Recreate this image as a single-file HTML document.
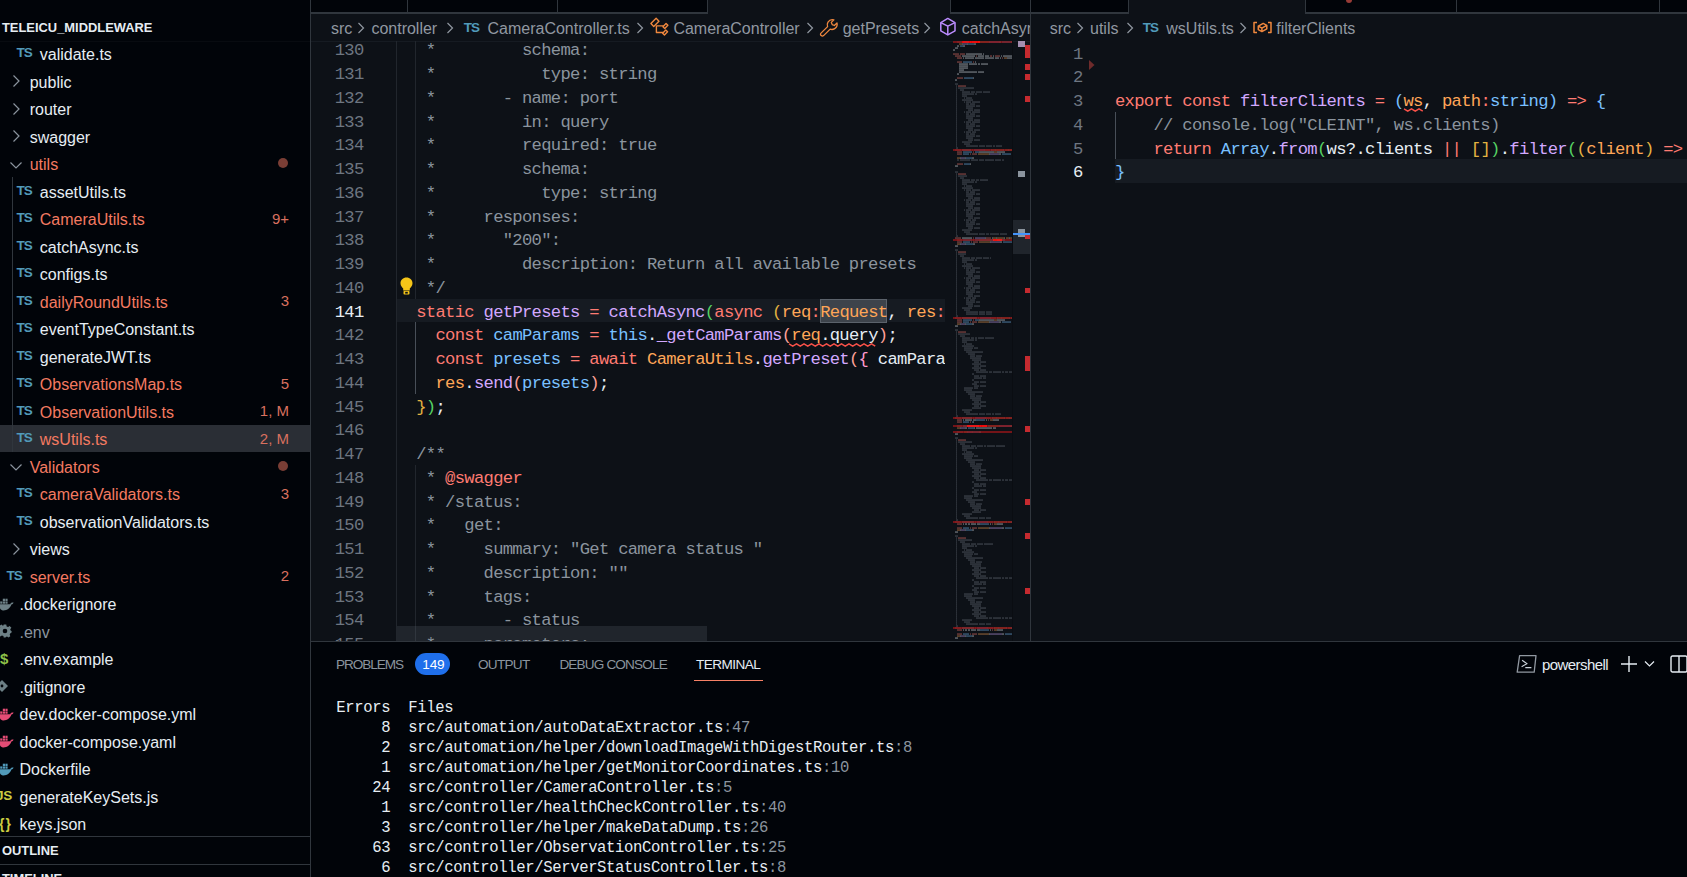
<!DOCTYPE html><html><head><meta charset="utf-8"><style>
*{margin:0;padding:0;box-sizing:border-box}
html,body{width:1687px;height:877px;overflow:hidden;background:#010409;}
body{position:relative;font-family:"Liberation Sans",sans-serif;color:#e6edf3;}
.a{position:absolute}
.ui{font-family:"Liberation Sans",sans-serif;font-size:16px;white-space:pre;line-height:20px}
.mono{font-family:"Liberation Mono",monospace;white-space:pre}
.code{font-size:17.2px;letter-spacing:-0.7px;line-height:23.75px;height:23.75px;padding-top:2px}
.k{color:#ff7b72} .f{color:#d2a8ff} .c{color:#79c0ff} .o{color:#ffa657} .cm{color:#8b949e} .w{color:#e6edf3}
.b1{color:#79c0ff} .b2{color:#56d364} .b3{color:#e3b341} .b4{color:#ffa198} .b5{color:#ff9bce}

</style></head><body>
<div class="a" style="left:0;top:0;width:310px;height:877px;background:#010409"></div>
<div class="a" style="left:310px;top:0;width:1px;height:877px;background:#30363d"></div>
<div class="a ui" style="left:2px;top:18px;font-size:12.9px;font-weight:bold;color:#e6edf3;letter-spacing:0px">TELEICU_MIDDLEWARE</div>
<div class="a" style="left:0;top:41px;width:310px;height:1px;background:#080b10"></div>
<div class="a" style="left:16.599999999999998px;top:47.300000000000004px;font-family:'Liberation Sans';font-weight:bold;font-size:13.5px;line-height:12px;color:#519aba;letter-spacing:-1px">TS</div>
<div class="a ui" style="left:39.8px;top:45.1px;color:#e6edf3">validate.ts</div>
<svg class="a" style="left:8.7px;top:74.1px" width="14" height="14" viewBox="0 0 14 14"><path d="M4.5 1.5 L10 7 L4.5 12.5" fill="none" stroke="#8b949e" stroke-width="1.2"/></svg>
<div class="a ui" style="left:29.7px;top:72.6px;color:#e6edf3">public</div>
<svg class="a" style="left:8.7px;top:101.6px" width="14" height="14" viewBox="0 0 14 14"><path d="M4.5 1.5 L10 7 L4.5 12.5" fill="none" stroke="#8b949e" stroke-width="1.2"/></svg>
<div class="a ui" style="left:29.7px;top:100.1px;color:#e6edf3">router</div>
<svg class="a" style="left:8.7px;top:129.1px" width="14" height="14" viewBox="0 0 14 14"><path d="M4.5 1.5 L10 7 L4.5 12.5" fill="none" stroke="#8b949e" stroke-width="1.2"/></svg>
<div class="a ui" style="left:29.7px;top:127.6px;color:#e6edf3">swagger</div>
<svg class="a" style="left:8.7px;top:157.6px" width="14" height="14" viewBox="0 0 14 14"><path d="M1.5 4.5 L7 10 L12.5 4.5" fill="none" stroke="#8b949e" stroke-width="1.2"/></svg>
<div class="a ui" style="left:29.7px;top:155.1px;color:#f47a61">utils</div>
<div class="a" style="left:278px;top:158.1px;width:10px;height:10px;border-radius:50%;background:#7a3e35"></div>
<div class="a" style="left:16.599999999999998px;top:184.79999999999998px;font-family:'Liberation Sans';font-weight:bold;font-size:13.5px;line-height:12px;color:#519aba;letter-spacing:-1px">TS</div>
<div class="a ui" style="left:39.8px;top:182.6px;color:#e6edf3">assetUtils.ts</div>
<div class="a" style="left:16.599999999999998px;top:212.29999999999998px;font-family:'Liberation Sans';font-weight:bold;font-size:13.5px;line-height:12px;color:#519aba;letter-spacing:-1px">TS</div>
<div class="a ui" style="left:39.8px;top:210.1px;color:#f47a61">CameraUtils.ts</div>
<div class="a ui" style="right:1398px;top:208.6px;color:#d9705f;font-size:15px">9+</div>
<div class="a" style="left:16.599999999999998px;top:239.79999999999998px;font-family:'Liberation Sans';font-weight:bold;font-size:13.5px;line-height:12px;color:#519aba;letter-spacing:-1px">TS</div>
<div class="a ui" style="left:39.8px;top:237.6px;color:#e6edf3">catchAsync.ts</div>
<div class="a" style="left:16.599999999999998px;top:267.30000000000007px;font-family:'Liberation Sans';font-weight:bold;font-size:13.5px;line-height:12px;color:#519aba;letter-spacing:-1px">TS</div>
<div class="a ui" style="left:39.8px;top:265.1px;color:#e6edf3">configs.ts</div>
<div class="a" style="left:16.599999999999998px;top:294.80000000000007px;font-family:'Liberation Sans';font-weight:bold;font-size:13.5px;line-height:12px;color:#519aba;letter-spacing:-1px">TS</div>
<div class="a ui" style="left:39.8px;top:292.6px;color:#f47a61">dailyRoundUtils.ts</div>
<div class="a ui" style="right:1398px;top:291.1px;color:#d9705f;font-size:15px">3</div>
<div class="a" style="left:16.599999999999998px;top:322.30000000000007px;font-family:'Liberation Sans';font-weight:bold;font-size:13.5px;line-height:12px;color:#519aba;letter-spacing:-1px">TS</div>
<div class="a ui" style="left:39.8px;top:320.1px;color:#e6edf3">eventTypeConstant.ts</div>
<div class="a" style="left:16.599999999999998px;top:349.80000000000007px;font-family:'Liberation Sans';font-weight:bold;font-size:13.5px;line-height:12px;color:#519aba;letter-spacing:-1px">TS</div>
<div class="a ui" style="left:39.8px;top:347.6px;color:#e6edf3">generateJWT.ts</div>
<div class="a" style="left:16.599999999999998px;top:377.30000000000007px;font-family:'Liberation Sans';font-weight:bold;font-size:13.5px;line-height:12px;color:#519aba;letter-spacing:-1px">TS</div>
<div class="a ui" style="left:39.8px;top:375.1px;color:#f47a61">ObservationsMap.ts</div>
<div class="a ui" style="right:1398px;top:373.6px;color:#d9705f;font-size:15px">5</div>
<div class="a" style="left:16.599999999999998px;top:404.80000000000007px;font-family:'Liberation Sans';font-weight:bold;font-size:13.5px;line-height:12px;color:#519aba;letter-spacing:-1px">TS</div>
<div class="a ui" style="left:39.8px;top:402.6px;color:#f47a61">ObservationUtils.ts</div>
<div class="a ui" style="right:1398px;top:401.1px;color:#d9705f;font-size:15px">1, M</div>
<div class="a" style="left:0;top:424.60px;width:310px;height:27.5px;background:#2a2e35"></div>
<div class="a" style="left:16.599999999999998px;top:432.30000000000007px;font-family:'Liberation Sans';font-weight:bold;font-size:13.5px;line-height:12px;color:#519aba;letter-spacing:-1px">TS</div>
<div class="a ui" style="left:39.8px;top:430.1px;color:#f47a61">wsUtils.ts</div>
<div class="a ui" style="right:1398px;top:428.6px;color:#d9705f;font-size:15px">2, M</div>
<svg class="a" style="left:8.7px;top:460.1px" width="14" height="14" viewBox="0 0 14 14"><path d="M1.5 4.5 L7 10 L12.5 4.5" fill="none" stroke="#8b949e" stroke-width="1.2"/></svg>
<div class="a ui" style="left:29.7px;top:457.6px;color:#f47a61">Validators</div>
<div class="a" style="left:278px;top:460.6px;width:10px;height:10px;border-radius:50%;background:#7a3e35"></div>
<div class="a" style="left:16.599999999999998px;top:487.30000000000007px;font-family:'Liberation Sans';font-weight:bold;font-size:13.5px;line-height:12px;color:#519aba;letter-spacing:-1px">TS</div>
<div class="a ui" style="left:39.8px;top:485.1px;color:#f47a61">cameraValidators.ts</div>
<div class="a ui" style="right:1398px;top:483.6px;color:#d9705f;font-size:15px">3</div>
<div class="a" style="left:16.599999999999998px;top:514.8000000000001px;font-family:'Liberation Sans';font-weight:bold;font-size:13.5px;line-height:12px;color:#519aba;letter-spacing:-1px">TS</div>
<div class="a ui" style="left:39.8px;top:512.6px;color:#e6edf3">observationValidators.ts</div>
<svg class="a" style="left:8.7px;top:541.6px" width="14" height="14" viewBox="0 0 14 14"><path d="M4.5 1.5 L10 7 L4.5 12.5" fill="none" stroke="#8b949e" stroke-width="1.2"/></svg>
<div class="a ui" style="left:29.7px;top:540.1px;color:#e6edf3">views</div>
<div class="a" style="left:6.499999999999999px;top:569.8000000000001px;font-family:'Liberation Sans';font-weight:bold;font-size:13.5px;line-height:12px;color:#519aba;letter-spacing:-1px">TS</div>
<div class="a ui" style="left:29.7px;top:567.6px;color:#f47a61">server.ts</div>
<div class="a ui" style="right:1398px;top:566.1px;color:#d9705f;font-size:15px">2</div>
<svg class="a" style="left:-1px;top:597.6px" width="15" height="13" viewBox="0 0 15 13"><path d="M0 6.2 H11.2 C11.6 5 12.6 4.4 14.6 4.6 C14.2 5.8 13.4 6.4 12.4 6.6 C11.4 10.2 8 12.6 4 12.4 C1.6 12.2 0.3 9.8 0 6.2 Z" fill="#6d8086"/><rect x="1.2" y="3.4" width="2.2" height="2.3" fill="#6d8086"/><rect x="3.8" y="3.4" width="2.2" height="2.3" fill="#6d8086"/><rect x="6.4" y="3.4" width="2.2" height="2.3" fill="#6d8086"/><rect x="3.8" y="0.7" width="2.2" height="2.3" fill="#6d8086"/><rect x="6.4" y="0.7" width="2.2" height="2.3" fill="#6d8086"/></svg>
<div class="a ui" style="left:19.5px;top:595.1px;color:#e6edf3">.dockerignore</div>
<svg class="a" style="left:-2px;top:624.1px" width="14" height="14" viewBox="-7 -7 14 14"><g fill="#6d8086"><path d="M-1.3 -6.5 H1.3 L1.6 -4.6 L3.1 -3.9 L4.6 -5.1 L6.4 -3.3 L5.2 -1.8 L5.8 -0.2 L6.6 0 V1.5 L5.4 2.2 L4.7 3.6 L5.3 5.2 L3.5 6.5 L2 5.5 L0.9 5.9 L0.6 6.6 H-1.3 L-1.6 5.1 L-3.1 4.4 L-4.7 5.5 L-6.4 3.6 L-5.2 2.1 L-5.8 0.6 L-6.6 0.3 V-1.6 L-5.5 -2 L-4.8 -3.5 L-5.6 -5.1 L-3.6 -6.4 L-2.1 -5.2 L-1.6 -5.4 Z"/></g><circle cx="0" cy="0" r="2.3" fill="#010409"/></svg>
<div class="a ui" style="left:19.5px;top:622.6px;color:#8b949e">.env</div>
<div class="a" style="left:0px;top:648.6px;font-size:15px;font-weight:bold;line-height:20px;color:#8dc149">$</div>
<div class="a ui" style="left:19.5px;top:650.1px;color:#e6edf3">.env.example</div>
<svg class="a" style="left:-4px;top:680.1px" width="12" height="12" viewBox="0 0 12 12"><path d="M6 0 L12 6 L6 12 L0 6 Z" fill="#6d8086"/><circle cx="6" cy="6" r="1.4" fill="#010409"/></svg>
<div class="a ui" style="left:19.5px;top:677.6px;color:#e6edf3">.gitignore</div>
<svg class="a" style="left:-1px;top:707.6px" width="15" height="13" viewBox="0 0 15 13"><path d="M0 6.2 H11.2 C11.6 5 12.6 4.4 14.6 4.6 C14.2 5.8 13.4 6.4 12.4 6.6 C11.4 10.2 8 12.6 4 12.4 C1.6 12.2 0.3 9.8 0 6.2 Z" fill="#e34c75"/><rect x="1.2" y="3.4" width="2.2" height="2.3" fill="#e34c75"/><rect x="3.8" y="3.4" width="2.2" height="2.3" fill="#e34c75"/><rect x="6.4" y="3.4" width="2.2" height="2.3" fill="#e34c75"/><rect x="3.8" y="0.7" width="2.2" height="2.3" fill="#e34c75"/><rect x="6.4" y="0.7" width="2.2" height="2.3" fill="#e34c75"/></svg>
<div class="a ui" style="left:19.5px;top:705.1px;color:#e6edf3">dev.docker-compose.yml</div>
<svg class="a" style="left:-1px;top:735.1px" width="15" height="13" viewBox="0 0 15 13"><path d="M0 6.2 H11.2 C11.6 5 12.6 4.4 14.6 4.6 C14.2 5.8 13.4 6.4 12.4 6.6 C11.4 10.2 8 12.6 4 12.4 C1.6 12.2 0.3 9.8 0 6.2 Z" fill="#e34c75"/><rect x="1.2" y="3.4" width="2.2" height="2.3" fill="#e34c75"/><rect x="3.8" y="3.4" width="2.2" height="2.3" fill="#e34c75"/><rect x="6.4" y="3.4" width="2.2" height="2.3" fill="#e34c75"/><rect x="3.8" y="0.7" width="2.2" height="2.3" fill="#e34c75"/><rect x="6.4" y="0.7" width="2.2" height="2.3" fill="#e34c75"/></svg>
<div class="a ui" style="left:19.5px;top:732.6px;color:#e6edf3">docker-compose.yaml</div>
<svg class="a" style="left:-1px;top:762.6px" width="15" height="13" viewBox="0 0 15 13"><path d="M0 6.2 H11.2 C11.6 5 12.6 4.4 14.6 4.6 C14.2 5.8 13.4 6.4 12.4 6.6 C11.4 10.2 8 12.6 4 12.4 C1.6 12.2 0.3 9.8 0 6.2 Z" fill="#519aba"/><rect x="1.2" y="3.4" width="2.2" height="2.3" fill="#519aba"/><rect x="3.8" y="3.4" width="2.2" height="2.3" fill="#519aba"/><rect x="6.4" y="3.4" width="2.2" height="2.3" fill="#519aba"/><rect x="3.8" y="0.7" width="2.2" height="2.3" fill="#519aba"/><rect x="6.4" y="0.7" width="2.2" height="2.3" fill="#519aba"/></svg>
<div class="a ui" style="left:19.5px;top:760.1px;color:#e6edf3">Dockerfile</div>
<div class="a" style="left:-4px;top:790.3000000000001px;font-weight:bold;font-size:13.5px;line-height:12px;color:#cbcb41;letter-spacing:-0.3px">JS</div>
<div class="a ui" style="left:19.5px;top:787.6px;color:#e6edf3">generateKeySets.js</div>
<div class="a" style="left:-1px;top:814.1px;font-weight:bold;font-size:14px;line-height:20px;color:#cbcb41;letter-spacing:1px">{}</div>
<div class="a ui" style="left:19.5px;top:815.1px;color:#e6edf3">keys.json</div>
<div class="a" style="left:12px;top:177.1px;width:1px;height:275.0px;background:#30363d"></div>
<div class="a" style="left:0;top:836px;width:310px;height:1px;background:#30363d"></div>
<div class="a ui" style="left:2px;top:841px;font-size:12.9px;font-weight:bold;color:#e6edf3">OUTLINE</div>
<div class="a" style="left:0;top:864px;width:310px;height:1px;background:#30363d"></div>
<div class="a ui" style="left:2px;top:869px;font-size:12.9px;font-weight:bold;color:#e6edf3">TIMELINE</div>
<div class="a" style="left:311px;top:0;width:1376px;height:641px;background:#0d1117"></div>
<div class="a" style="left:311px;top:0;width:1376px;height:12px;background:#010409"></div>
<div class="a" style="left:311px;top:12px;width:1376px;height:2px;background:#30363d"></div>
<div class="a" style="left:407px;top:0;width:1px;height:12px;background:#30363d"></div>
<div class="a" style="left:557px;top:0;width:1px;height:12px;background:#30363d"></div>
<div class="a" style="left:1456px;top:0;width:1px;height:12px;background:#30363d"></div>
<div class="a" style="left:1659px;top:0;width:1px;height:12px;background:#30363d"></div>
<div class="a" style="left:707px;top:0;width:244px;height:14px;background:#0d1117;border-left:1px solid #30363d;border-right:1px solid #30363d"></div>
<div class="a" style="left:1128px;top:0;width:178px;height:14px;background:#0d1117;border-left:1px solid #30363d;border-right:1px solid #30363d"></div>
<div class="a" style="left:311px;top:40.5px;width:719px;height:1px;background:#161b22"></div>
<div class="a" style="left:1030px;top:0;width:1px;height:641px;background:#30363d"></div>
<div class="a" style="left:311px;top:13px;width:719px;height:28px;overflow:hidden">
<div class="a ui" style="left:20px;top:6.2px;color:#9198a1">src</div>
<svg class="a" style="left:46px;top:8px" width="8" height="14" viewBox="0 0 8 14"><path d="M1.5 2 L6.5 7 L1.5 12" fill="none" stroke="#9198a1" stroke-width="1.2"/></svg>
<div class="a ui" style="left:60.39999999999998px;top:6.2px;color:#9198a1">controller</div>
<svg class="a" style="left:135px;top:8px" width="8" height="14" viewBox="0 0 8 14"><path d="M1.5 2 L6.5 7 L1.5 12" fill="none" stroke="#9198a1" stroke-width="1.2"/></svg>
<div class="a" style="left:152.7px;top:9.3px;font-weight:bold;font-size:13.5px;line-height:12px;color:#519aba;letter-spacing:-1px">TS</div>
<div class="a ui" style="left:176.5px;top:6.2px;color:#9198a1">CameraController.ts</div>
<svg class="a" style="left:325px;top:8px" width="8" height="14" viewBox="0 0 8 14"><path d="M1.5 2 L6.5 7 L1.5 12" fill="none" stroke="#9198a1" stroke-width="1.2"/></svg>
<svg class="a" style="left:334px;top:1px" width="30" height="28" viewBox="645 14 30 28"><g fill="none" stroke="#f0883e" stroke-width="1.4" stroke-linejoin="round"><rect x="651.2" y="20.3" width="7.4" height="4.0" transform="rotate(-45 655 22.3)"/><rect x="663.2" y="24.7" width="4.4" height="2.6" transform="rotate(-45 665.4 26)"/><rect x="662.9" y="31.2" width="4.4" height="2.6" transform="rotate(-45 665.1 32.5)"/><path d="M656.4 25.6 V32.5 H663.2 M656.4 25.9 H663.6"/></g></svg>
<div class="a ui" style="left:362.4px;top:6.2px;color:#9198a1">CameraController</div>
<svg class="a" style="left:495px;top:8px" width="8" height="14" viewBox="0 0 8 14"><path d="M1.5 2 L6.5 7 L1.5 12" fill="none" stroke="#9198a1" stroke-width="1.2"/></svg>
<svg class="a" style="left:504px;top:1px" width="30" height="28" viewBox="815 14 30 28"><path d="M821.2 35.6 C820.3 34.9 820.3 33.8 821 33.1 L827.6 26.6 C827 25.2 827.1 23.5 828 22.1 C829.3 20.1 831.7 19.2 833.9 19.8 L831.3 22.4 L832.2 24.6 L834.4 25.5 L837 22.9 C837.5 25.1 836.6 27.4 834.7 28.6 C833.3 29.5 831.6 29.7 830.2 29.1 L823.6 35.6 C822.9 36.2 821.9 36.2 821.2 35.6 Z" fill="none" stroke="#f0883e" stroke-width="1.3" stroke-linejoin="round"/></svg>
<div class="a ui" style="left:531.7px;top:6.2px;color:#9198a1">getPresets</div>
<svg class="a" style="left:612px;top:8px" width="8" height="14" viewBox="0 0 8 14"><path d="M1.5 2 L6.5 7 L1.5 12" fill="none" stroke="#9198a1" stroke-width="1.2"/></svg>
<svg class="a" style="left:624px;top:1px" width="30" height="28" viewBox="935 14 30 28"><g fill="none" stroke="#bc8cff" stroke-width="1.5" stroke-linejoin="round"><path d="M947.8 18.4 L955 22.7 L955 30.8 L947.8 34.9 L940.8 30.8 L940.8 22.7 Z"/><path d="M940.8 22.7 L947.8 26.2 L955 22.7 M947.8 26.2 V34.9"/></g></svg>
<div class="a ui" style="left:650.8px;top:6.2px;color:#9198a1">catchAsync</div>
</div>
<div class="a" style="left:1031px;top:13px;width:656px;height:28px;overflow:hidden">
<div class="a ui" style="left:18.700000000000045px;top:6.2px;color:#9198a1">src</div>
<svg class="a" style="left:44.5px;top:8px" width="8" height="14" viewBox="0 0 8 14"><path d="M1.5 2 L6.5 7 L1.5 12" fill="none" stroke="#9198a1" stroke-width="1.2"/></svg>
<div class="a ui" style="left:59px;top:6.2px;color:#9198a1">utils</div>
<svg class="a" style="left:94.5px;top:8px" width="8" height="14" viewBox="0 0 8 14"><path d="M1.5 2 L6.5 7 L1.5 12" fill="none" stroke="#9198a1" stroke-width="1.2"/></svg>
<div class="a" style="left:111.79999999999995px;top:9.3px;font-weight:bold;font-size:13.5px;line-height:12px;color:#519aba;letter-spacing:-1px">TS</div>
<div class="a ui" style="left:135.29999999999995px;top:6.2px;color:#9198a1">wsUtils.ts</div>
<svg class="a" style="left:207.5px;top:8px" width="8" height="14" viewBox="0 0 8 14"><path d="M1.5 2 L6.5 7 L1.5 12" fill="none" stroke="#9198a1" stroke-width="1.2"/></svg>
<svg class="a" style="left:217px;top:1px" width="30" height="28" viewBox="1248 14 30 28"><g fill="none" stroke="#f0883e" stroke-width="1.5" stroke-linejoin="round"><path d="M1257 22.5 H1254 V32.6 H1257 M1268 22.5 H1271 V32.6 H1268"/><path d="M1258.3 26.2 L1263.2 23.4 L1266.8 25.4 L1266.8 28.8 L1261.9 31.6 L1258.3 29.6 Z M1258.3 26.2 L1261.9 28.2 L1266.8 25.4 M1261.9 28.2 V31.6"/></g></svg>
<div class="a ui" style="left:245.20000000000005px;top:6.2px;color:#9198a1">filterClients</div>
</div>
<div class="a" style="left:397px;top:298.52px;width:548px;height:23.75px;background:#161b22"></div>
<div class="a" style="left:820px;top:299px;width:67px;height:23.5px;background:#3d434b;border:1px solid #5b626b"></div>
<div class="a" style="left:311px;top:41px;width:634px;height:600px;overflow:hidden">
<div class="a" style="left:85px;top:0;width:1px;height:600px;background:#21262d"></div>
<div class="a" style="left:104px;top:0;width:1px;height:257.52px;background:#21262d"></div>
<div class="a" style="left:104px;top:281.27px;width:1px;height:71.25px;background:#484f58"></div>
<div class="a" style="left:104px;top:423.77px;width:1px;height:400px;background:#21262d"></div>
<div class="a mono code" style="left:0;width:52.5px;text-align:right;top:-3.73px;color:#6e7681">130</div>
<div class="a mono code" style="left:86px;top:-3.73px"><span class="cm">   *         schema:</span></div>
<div class="a mono code" style="left:0;width:52.5px;text-align:right;top:20.02px;color:#6e7681">131</div>
<div class="a mono code" style="left:86px;top:20.02px"><span class="cm">   *           type: string</span></div>
<div class="a mono code" style="left:0;width:52.5px;text-align:right;top:43.77px;color:#6e7681">132</div>
<div class="a mono code" style="left:86px;top:43.77px"><span class="cm">   *       - name: port</span></div>
<div class="a mono code" style="left:0;width:52.5px;text-align:right;top:67.52px;color:#6e7681">133</div>
<div class="a mono code" style="left:86px;top:67.52px"><span class="cm">   *         in: query</span></div>
<div class="a mono code" style="left:0;width:52.5px;text-align:right;top:91.27px;color:#6e7681">134</div>
<div class="a mono code" style="left:86px;top:91.27px"><span class="cm">   *         required: true</span></div>
<div class="a mono code" style="left:0;width:52.5px;text-align:right;top:115.02px;color:#6e7681">135</div>
<div class="a mono code" style="left:86px;top:115.02px"><span class="cm">   *         schema:</span></div>
<div class="a mono code" style="left:0;width:52.5px;text-align:right;top:138.77px;color:#6e7681">136</div>
<div class="a mono code" style="left:86px;top:138.77px"><span class="cm">   *           type: string</span></div>
<div class="a mono code" style="left:0;width:52.5px;text-align:right;top:162.52px;color:#6e7681">137</div>
<div class="a mono code" style="left:86px;top:162.52px"><span class="cm">   *     responses:</span></div>
<div class="a mono code" style="left:0;width:52.5px;text-align:right;top:186.27px;color:#6e7681">138</div>
<div class="a mono code" style="left:86px;top:186.27px"><span class="cm">   *       &quot;200&quot;:</span></div>
<div class="a mono code" style="left:0;width:52.5px;text-align:right;top:210.02px;color:#6e7681">139</div>
<div class="a mono code" style="left:86px;top:210.02px"><span class="cm">   *         description: Return all available presets</span></div>
<div class="a mono code" style="left:0;width:52.5px;text-align:right;top:233.77px;color:#6e7681">140</div>
<div class="a mono code" style="left:86px;top:233.77px"><span class="cm">   */</span></div>
<div class="a mono code" style="left:0;width:52.5px;text-align:right;top:257.52px;color:#e6edf3">141</div>
<div class="a mono code" style="left:86px;top:257.52px"><span class="w">  </span><span class="k">static</span><span class="w"> </span><span class="f">getPresets</span><span class="w"> </span><span class="k">=</span><span class="w"> </span><span class="f">catchAsync</span><span class="b2">(</span><span class="k">async</span><span class="w"> </span><span class="b3">(</span><span class="o">req</span><span class="k">:</span><span class="o">Request</span><span class="w">, </span><span class="o">res</span><span class="k">:</span></div>
<div class="a mono code" style="left:0;width:52.5px;text-align:right;top:281.27px;color:#6e7681">142</div>
<div class="a mono code" style="left:86px;top:281.27px"><span class="w">    </span><span class="k">const</span><span class="w"> </span><span class="c">camParams</span><span class="w"> </span><span class="k">=</span><span class="w"> </span><span class="c">this</span><span class="w">.</span><span class="f">_getCamParams</span><span class="b4">(</span><span class="o sq">req</span><span class="w sq">.query</span><span class="b4">)</span><span class="w">;</span></div>
<div class="a mono code" style="left:0;width:52.5px;text-align:right;top:305.02px;color:#6e7681">143</div>
<div class="a mono code" style="left:86px;top:305.02px"><span class="w">    </span><span class="k">const</span><span class="w"> </span><span class="c">presets</span><span class="w"> </span><span class="k">=</span><span class="w"> </span><span class="k">await</span><span class="w"> </span><span class="o">CameraUtils</span><span class="w">.</span><span class="f">getPreset</span><span class="b4">(</span><span class="b5">{</span><span class="w"> camParams</span></div>
<div class="a mono code" style="left:0;width:52.5px;text-align:right;top:328.77px;color:#6e7681">144</div>
<div class="a mono code" style="left:86px;top:328.77px"><span class="w">    </span><span class="o">res</span><span class="w">.</span><span class="f">send</span><span class="b4">(</span><span class="c">presets</span><span class="b4">)</span><span class="w">;</span></div>
<div class="a mono code" style="left:0;width:52.5px;text-align:right;top:352.52px;color:#6e7681">145</div>
<div class="a mono code" style="left:86px;top:352.52px"><span class="w">  </span><span class="b3">}</span><span class="b2">)</span><span class="w">;</span></div>
<div class="a mono code" style="left:0;width:52.5px;text-align:right;top:376.27px;color:#6e7681">146</div>
<div class="a mono code" style="left:86px;top:376.27px"></div>
<div class="a mono code" style="left:0;width:52.5px;text-align:right;top:400.02px;color:#6e7681">147</div>
<div class="a mono code" style="left:86px;top:400.02px"><span class="cm">  /**</span></div>
<div class="a mono code" style="left:0;width:52.5px;text-align:right;top:423.77px;color:#6e7681">148</div>
<div class="a mono code" style="left:86px;top:423.77px"><span class="cm">   * </span><span class="k">@swagger</span></div>
<div class="a mono code" style="left:0;width:52.5px;text-align:right;top:447.52px;color:#6e7681">149</div>
<div class="a mono code" style="left:86px;top:447.52px"><span class="cm">   * /status:</span></div>
<div class="a mono code" style="left:0;width:52.5px;text-align:right;top:471.27px;color:#6e7681">150</div>
<div class="a mono code" style="left:86px;top:471.27px"><span class="cm">   *   get:</span></div>
<div class="a mono code" style="left:0;width:52.5px;text-align:right;top:495.02px;color:#6e7681">151</div>
<div class="a mono code" style="left:86px;top:495.02px"><span class="cm">   *     summary: &quot;Get camera status &quot;</span></div>
<div class="a mono code" style="left:0;width:52.5px;text-align:right;top:518.77px;color:#6e7681">152</div>
<div class="a mono code" style="left:86px;top:518.77px"><span class="cm">   *     description: &quot;&quot;</span></div>
<div class="a mono code" style="left:0;width:52.5px;text-align:right;top:542.52px;color:#6e7681">153</div>
<div class="a mono code" style="left:86px;top:542.52px"><span class="cm">   *     tags:</span></div>
<div class="a mono code" style="left:0;width:52.5px;text-align:right;top:566.27px;color:#6e7681">154</div>
<div class="a mono code" style="left:86px;top:566.27px"><span class="cm">   *       - status</span></div>
<div class="a mono code" style="left:0;width:52.5px;text-align:right;top:590.02px;color:#6e7681">155</div>
<div class="a mono code" style="left:86px;top:590.02px"><span class="cm">   *     parameters:</span></div>
<svg class="a" style="left:89px;top:236px" width="13" height="18" viewBox="0 0 13 18"><path d="M6.5 0.5 C10 0.5 12.5 3 12.5 6.3 C12.5 8.8 11 10.2 9.8 11.5 L9.8 13.5 L3.2 13.5 L3.2 11.5 C2 10.2 0.5 8.8 0.5 6.3 C0.5 3 3 0.5 6.5 0.5 Z" fill="#f5c518"/><rect x="3.5" y="14" width="6" height="3.5" rx="0.8" fill="#f5c518"/><rect x="5.2" y="14.8" width="2.6" height="1.8" fill="#0d1117"/></svg>
<div class="a" style="left:85.5px;top:585px;width:310px;height:15px;background:#6e768133"></div>
</div>
<svg class="a" style="left:953px;top:41px" width="59" height="600" viewBox="0 0 59 600"><rect x="4" y="-1.6" width="2" height="1.3" fill="#e6edf3" opacity="0.45"/><rect x="0" y="0.0" width="59" height="2" fill="#8e1519" opacity="0.8"/><rect x="9" y="0.0" width="18" height="2" fill="#f00" opacity="0.85"/><rect x="4" y="0.4" width="5" height="1.3" fill="#ff7b72" opacity="0.15"/><rect x="10" y="0.4" width="6" height="1.3" fill="#79c0ff" opacity="0.15"/><rect x="17" y="0.4" width="1" height="1.3" fill="#ff7b72" opacity="0.15"/><rect x="19" y="0.4" width="5" height="1.3" fill="#ff7b72" opacity="0.15"/><rect x="25" y="0.4" width="11" height="1.3" fill="#ffa657" opacity="0.15"/><rect x="36" y="0.4" width="1" height="1.3" fill="#e6edf3" opacity="0.15"/><rect x="37" y="0.4" width="9" height="1.3" fill="#d2a8ff" opacity="0.15"/><rect x="46" y="0.4" width="2" height="1.3" fill="#e6edf3" opacity="0.15"/><rect x="49" y="0.4" width="9" height="1.3" fill="#79c0ff" opacity="0.15"/><rect x="58" y="0.4" width="1" height="1.3" fill="#e6edf3" opacity="0.15"/><rect x="6" y="2.4" width="3" height="1.3" fill="#ffa657" opacity="0.45"/><rect x="9" y="2.4" width="1" height="1.3" fill="#e6edf3" opacity="0.45"/><rect x="10" y="2.4" width="4" height="1.3" fill="#d2a8ff" opacity="0.45"/><rect x="14" y="2.4" width="1" height="1.3" fill="#e6edf3" opacity="0.45"/><rect x="15" y="2.4" width="6" height="1.3" fill="#79c0ff" opacity="0.45"/><rect x="21" y="2.4" width="2" height="1.3" fill="#e6edf3" opacity="0.45"/><rect x="4" y="4.4" width="2" height="1.3" fill="#e6edf3" opacity="0.45"/><rect x="7" y="4.4" width="3" height="1.3" fill="#79c0ff" opacity="0.45"/><rect x="10" y="4.4" width="2" height="1.3" fill="#e6edf3" opacity="0.45"/><rect x="2" y="6.4" width="3" height="1.3" fill="#e6edf3" opacity="0.45"/><rect x="0" y="8.4" width="2" height="1.3" fill="#e6edf3" opacity="0.45"/><rect x="0" y="12.4" width="6" height="1.3" fill="#ff7b72" opacity="0.45"/><rect x="7" y="12.4" width="5" height="1.3" fill="#ff7b72" opacity="0.45"/><rect x="13" y="12.4" width="16" height="1.3" fill="#e6edf3" opacity="0.45"/><rect x="30" y="12.4" width="1" height="1.3" fill="#e6edf3" opacity="0.45"/><rect x="2" y="14.4" width="6" height="1.3" fill="#ff7b72" opacity="0.45"/><rect x="9" y="14.4" width="13" height="1.3" fill="#e6edf3" opacity="0.45"/><rect x="23" y="14.4" width="1" height="1.3" fill="#ff7b72" opacity="0.45"/><rect x="25" y="14.4" width="1" height="1.3" fill="#e6edf3" opacity="0.45"/><rect x="26" y="14.4" width="4" height="1.3" fill="#e6edf3" opacity="0.45"/><rect x="30" y="14.4" width="1" height="1.3" fill="#e6edf3" opacity="0.45"/><rect x="32" y="14.4" width="3" height="1.3" fill="#e6edf3" opacity="0.45"/><rect x="35" y="14.4" width="1" height="1.3" fill="#e6edf3" opacity="0.45"/><rect x="37" y="14.4" width="2" height="1.3" fill="#ff7b72" opacity="0.45"/><rect x="40" y="14.4" width="1" height="1.3" fill="#e6edf3" opacity="0.45"/><rect x="42" y="14.4" width="5" height="1.3" fill="#ff7b72" opacity="0.45"/><rect x="48" y="14.4" width="1" height="1.3" fill="#e6edf3" opacity="0.45"/><rect x="50" y="14.4" width="8" height="1.3" fill="#e6edf3" opacity="0.45"/><rect x="58" y="14.4" width="1" height="1.3" fill="#e6edf3" opacity="0.45"/><rect x="4" y="16.4" width="5" height="1.3" fill="#ff7b72" opacity="0.45"/><rect x="10" y="16.4" width="1" height="1.3" fill="#e6edf3" opacity="0.45"/><rect x="12" y="16.4" width="8" height="1.3" fill="#e6edf3" opacity="0.45"/><rect x="20" y="16.4" width="1" height="1.3" fill="#e6edf3" opacity="0.45"/><rect x="22" y="16.4" width="8" height="1.3" fill="#e6edf3" opacity="0.45"/><rect x="30" y="16.4" width="1" height="1.3" fill="#e6edf3" opacity="0.45"/><rect x="32" y="16.4" width="8" height="1.3" fill="#e6edf3" opacity="0.45"/><rect x="40" y="16.4" width="1" height="1.3" fill="#e6edf3" opacity="0.45"/><rect x="42" y="16.4" width="4" height="1.3" fill="#e6edf3" opacity="0.45"/><rect x="47" y="16.4" width="1" height="1.3" fill="#e6edf3" opacity="0.45"/><rect x="49" y="16.4" width="1" height="1.3" fill="#ff7b72" opacity="0.45"/><rect x="51" y="16.4" width="3" height="1.3" fill="#ffa657" opacity="0.45"/><rect x="54" y="16.4" width="1" height="1.3" fill="#e6edf3" opacity="0.45"/><rect x="55" y="16.4" width="4" height="1.3" fill="#e6edf3" opacity="0.45"/><rect x="4" y="20.4" width="5" height="1.3" fill="#ff7b72" opacity="0.45"/><rect x="10" y="20.4" width="9" height="1.3" fill="#79c0ff" opacity="0.45"/><rect x="20" y="20.4" width="1" height="1.3" fill="#ff7b72" opacity="0.45"/><rect x="22" y="20.4" width="1" height="1.3" fill="#e6edf3" opacity="0.45"/><rect x="6" y="22.4" width="8" height="1.3" fill="#e6edf3" opacity="0.45"/><rect x="14" y="22.4" width="1" height="1.3" fill="#e6edf3" opacity="0.45"/><rect x="16" y="22.4" width="8" height="1.3" fill="#e6edf3" opacity="0.45"/><rect x="25" y="22.4" width="2" height="1.3" fill="#e6edf3" opacity="0.45"/><rect x="28" y="22.4" width="6" height="1.3" fill="#e6edf3" opacity="0.45"/><rect x="34" y="22.4" width="1" height="1.3" fill="#e6edf3" opacity="0.45"/><rect x="6" y="24.4" width="8" height="1.3" fill="#e6edf3" opacity="0.45"/><rect x="14" y="24.4" width="1" height="1.3" fill="#e6edf3" opacity="0.45"/><rect x="6" y="26.4" width="8" height="1.3" fill="#e6edf3" opacity="0.45"/><rect x="14" y="26.4" width="1" height="1.3" fill="#e6edf3" opacity="0.45"/><rect x="6" y="28.4" width="4" height="1.3" fill="#e6edf3" opacity="0.45"/><rect x="10" y="28.4" width="1" height="1.3" fill="#e6edf3" opacity="0.45"/><rect x="6" y="30.4" width="17" height="1.3" fill="#e6edf3" opacity="0.45"/><rect x="23" y="30.4" width="1" height="1.3" fill="#e6edf3" opacity="0.45"/><rect x="25" y="30.4" width="5" height="1.3" fill="#e6edf3" opacity="0.45"/><rect x="30" y="30.4" width="1" height="1.3" fill="#e6edf3" opacity="0.45"/><rect x="4" y="32.4" width="2" height="1.3" fill="#e6edf3" opacity="0.45"/><rect x="4" y="36.4" width="6" height="1.3" fill="#ff7b72" opacity="0.45"/><rect x="11" y="36.4" width="9" height="1.3" fill="#79c0ff" opacity="0.45"/><rect x="20" y="36.4" width="1" height="1.3" fill="#e6edf3" opacity="0.45"/><rect x="2" y="38.4" width="2" height="1.3" fill="#e6edf3" opacity="0.45"/><rect x="2" y="42.4" width="3" height="1.3" fill="#8b949e" opacity="0.36"/><rect x="3" y="44.4" width="1" height="1.3" fill="#8b949e" opacity="0.36"/><rect x="5" y="44.4" width="8" height="1.3" fill="#ff7b72" opacity="0.45"/><rect x="3" y="46.4" width="1" height="1.3" fill="#8b949e" opacity="0.36"/><rect x="5" y="46.4" width="16" height="1.3" fill="#8b949e" opacity="0.36"/><rect x="3" y="48.4" width="1" height="1.3" fill="#8b949e" opacity="0.36"/><rect x="7" y="48.4" width="4" height="1.3" fill="#8b949e" opacity="0.36"/><rect x="3" y="50.4" width="1" height="1.3" fill="#8b949e" opacity="0.36"/><rect x="9" y="50.4" width="8" height="1.3" fill="#8b949e" opacity="0.36"/><rect x="18" y="50.4" width="4" height="1.3" fill="#8b949e" opacity="0.36"/><rect x="23" y="50.4" width="6" height="1.3" fill="#8b949e" opacity="0.36"/><rect x="30" y="50.4" width="7" height="1.3" fill="#8b949e" opacity="0.36"/><rect x="3" y="52.4" width="1" height="1.3" fill="#8b949e" opacity="0.36"/><rect x="9" y="52.4" width="12" height="1.3" fill="#8b949e" opacity="0.36"/><rect x="22" y="52.4" width="2" height="1.3" fill="#8b949e" opacity="0.36"/><rect x="3" y="54.4" width="1" height="1.3" fill="#8b949e" opacity="0.36"/><rect x="9" y="54.4" width="5" height="1.3" fill="#8b949e" opacity="0.36"/><rect x="3" y="56.4" width="1" height="1.3" fill="#8b949e" opacity="0.36"/><rect x="11" y="56.4" width="1" height="1.3" fill="#8b949e" opacity="0.36"/><rect x="13" y="56.4" width="6" height="1.3" fill="#8b949e" opacity="0.36"/><rect x="3" y="58.4" width="1" height="1.3" fill="#8b949e" opacity="0.36"/><rect x="9" y="58.4" width="11" height="1.3" fill="#8b949e" opacity="0.36"/><rect x="3" y="60.4" width="1" height="1.3" fill="#8b949e" opacity="0.36"/><rect x="11" y="60.4" width="1" height="1.3" fill="#8b949e" opacity="0.36"/><rect x="13" y="60.4" width="5" height="1.3" fill="#8b949e" opacity="0.36"/><rect x="19" y="60.4" width="8" height="1.3" fill="#8b949e" opacity="0.36"/><rect x="3" y="62.4" width="1" height="1.3" fill="#8b949e" opacity="0.36"/><rect x="13" y="62.4" width="3" height="1.3" fill="#8b949e" opacity="0.36"/><rect x="17" y="62.4" width="5" height="1.3" fill="#8b949e" opacity="0.36"/><rect x="3" y="64.4" width="1" height="1.3" fill="#8b949e" opacity="0.36"/><rect x="13" y="64.4" width="9" height="1.3" fill="#8b949e" opacity="0.36"/><rect x="23" y="64.4" width="4" height="1.3" fill="#8b949e" opacity="0.36"/><rect x="3" y="66.4" width="1" height="1.3" fill="#8b949e" opacity="0.36"/><rect x="13" y="66.4" width="7" height="1.3" fill="#8b949e" opacity="0.36"/><rect x="3" y="68.4" width="1" height="1.3" fill="#8b949e" opacity="0.36"/><rect x="15" y="68.4" width="5" height="1.3" fill="#8b949e" opacity="0.36"/><rect x="21" y="68.4" width="6" height="1.3" fill="#8b949e" opacity="0.36"/><rect x="3" y="70.4" width="1" height="1.3" fill="#8b949e" opacity="0.36"/><rect x="11" y="70.4" width="1" height="1.3" fill="#8b949e" opacity="0.36"/><rect x="13" y="70.4" width="5" height="1.3" fill="#8b949e" opacity="0.36"/><rect x="19" y="70.4" width="8" height="1.3" fill="#8b949e" opacity="0.36"/><rect x="3" y="72.4" width="1" height="1.3" fill="#8b949e" opacity="0.36"/><rect x="13" y="72.4" width="3" height="1.3" fill="#8b949e" opacity="0.36"/><rect x="17" y="72.4" width="5" height="1.3" fill="#8b949e" opacity="0.36"/><rect x="3" y="74.4" width="1" height="1.3" fill="#8b949e" opacity="0.36"/><rect x="13" y="74.4" width="9" height="1.3" fill="#8b949e" opacity="0.36"/><rect x="23" y="74.4" width="4" height="1.3" fill="#8b949e" opacity="0.36"/><rect x="3" y="76.4" width="1" height="1.3" fill="#8b949e" opacity="0.36"/><rect x="13" y="76.4" width="7" height="1.3" fill="#8b949e" opacity="0.36"/><rect x="3" y="78.4" width="1" height="1.3" fill="#8b949e" opacity="0.36"/><rect x="15" y="78.4" width="5" height="1.3" fill="#8b949e" opacity="0.36"/><rect x="21" y="78.4" width="6" height="1.3" fill="#8b949e" opacity="0.36"/><rect x="3" y="80.4" width="1" height="1.3" fill="#8b949e" opacity="0.36"/><rect x="11" y="80.4" width="1" height="1.3" fill="#8b949e" opacity="0.36"/><rect x="13" y="80.4" width="5" height="1.3" fill="#8b949e" opacity="0.36"/><rect x="19" y="80.4" width="8" height="1.3" fill="#8b949e" opacity="0.36"/><rect x="3" y="82.4" width="1" height="1.3" fill="#8b949e" opacity="0.36"/><rect x="13" y="82.4" width="3" height="1.3" fill="#8b949e" opacity="0.36"/><rect x="17" y="82.4" width="5" height="1.3" fill="#8b949e" opacity="0.36"/><rect x="3" y="84.4" width="1" height="1.3" fill="#8b949e" opacity="0.36"/><rect x="13" y="84.4" width="9" height="1.3" fill="#8b949e" opacity="0.36"/><rect x="23" y="84.4" width="4" height="1.3" fill="#8b949e" opacity="0.36"/><rect x="3" y="86.4" width="1" height="1.3" fill="#8b949e" opacity="0.36"/><rect x="13" y="86.4" width="7" height="1.3" fill="#8b949e" opacity="0.36"/><rect x="3" y="88.4" width="1" height="1.3" fill="#8b949e" opacity="0.36"/><rect x="15" y="88.4" width="5" height="1.3" fill="#8b949e" opacity="0.36"/><rect x="21" y="88.4" width="6" height="1.3" fill="#8b949e" opacity="0.36"/><rect x="3" y="90.4" width="1" height="1.3" fill="#8b949e" opacity="0.36"/><rect x="11" y="90.4" width="1" height="1.3" fill="#8b949e" opacity="0.36"/><rect x="13" y="90.4" width="5" height="1.3" fill="#8b949e" opacity="0.36"/><rect x="19" y="90.4" width="4" height="1.3" fill="#8b949e" opacity="0.36"/><rect x="3" y="92.4" width="1" height="1.3" fill="#8b949e" opacity="0.36"/><rect x="13" y="92.4" width="3" height="1.3" fill="#8b949e" opacity="0.36"/><rect x="17" y="92.4" width="5" height="1.3" fill="#8b949e" opacity="0.36"/><rect x="3" y="94.4" width="1" height="1.3" fill="#8b949e" opacity="0.36"/><rect x="13" y="94.4" width="9" height="1.3" fill="#8b949e" opacity="0.36"/><rect x="23" y="94.4" width="4" height="1.3" fill="#8b949e" opacity="0.36"/><rect x="3" y="96.4" width="1" height="1.3" fill="#8b949e" opacity="0.36"/><rect x="13" y="96.4" width="7" height="1.3" fill="#8b949e" opacity="0.36"/><rect x="3" y="98.4" width="1" height="1.3" fill="#8b949e" opacity="0.36"/><rect x="15" y="98.4" width="5" height="1.3" fill="#8b949e" opacity="0.36"/><rect x="21" y="98.4" width="6" height="1.3" fill="#8b949e" opacity="0.36"/><rect x="3" y="100.4" width="1" height="1.3" fill="#8b949e" opacity="0.36"/><rect x="9" y="100.4" width="10" height="1.3" fill="#8b949e" opacity="0.36"/><rect x="3" y="102.4" width="1" height="1.3" fill="#8b949e" opacity="0.36"/><rect x="11" y="102.4" width="6" height="1.3" fill="#8b949e" opacity="0.36"/><rect x="3" y="104.4" width="1" height="1.3" fill="#8b949e" opacity="0.36"/><rect x="13" y="104.4" width="12" height="1.3" fill="#8b949e" opacity="0.36"/><rect x="26" y="104.4" width="6" height="1.3" fill="#8b949e" opacity="0.36"/><rect x="33" y="104.4" width="6" height="1.3" fill="#8b949e" opacity="0.36"/><rect x="40" y="104.4" width="2" height="1.3" fill="#8b949e" opacity="0.36"/><rect x="43" y="104.4" width="6" height="1.3" fill="#8b949e" opacity="0.36"/><rect x="3" y="106.4" width="2" height="1.3" fill="#8b949e" opacity="0.36"/><rect x="0" y="108.0" width="59" height="2" fill="#8e1519" opacity="0.8"/><rect x="2" y="108.4" width="6" height="1.3" fill="#ff7b72" opacity="0.15"/><rect x="9" y="108.4" width="9" height="1.3" fill="#e6edf3" opacity="0.15"/><rect x="19" y="108.4" width="1" height="1.3" fill="#ff7b72" opacity="0.15"/><rect x="21" y="108.4" width="10" height="1.3" fill="#d2a8ff" opacity="0.15"/><rect x="31" y="108.4" width="1" height="1.3" fill="#e6edf3" opacity="0.15"/><rect x="32" y="108.4" width="5" height="1.3" fill="#ff7b72" opacity="0.15"/><rect x="38" y="108.4" width="1" height="1.3" fill="#e6edf3" opacity="0.15"/><rect x="39" y="108.4" width="3" height="1.3" fill="#ffa657" opacity="0.15"/><rect x="42" y="108.4" width="1" height="1.3" fill="#e6edf3" opacity="0.15"/><rect x="43" y="108.4" width="7" height="1.3" fill="#ffa657" opacity="0.15"/><rect x="50" y="108.4" width="1" height="1.3" fill="#e6edf3" opacity="0.15"/><rect x="52" y="108.4" width="3" height="1.3" fill="#ffa657" opacity="0.15"/><rect x="55" y="108.4" width="1" height="1.3" fill="#e6edf3" opacity="0.15"/><rect x="56" y="108.4" width="3" height="1.3" fill="#ffa657" opacity="0.15"/><rect x="4" y="110.4" width="5" height="1.3" fill="#ff7b72" opacity="0.45"/><rect x="10" y="110.4" width="9" height="1.3" fill="#79c0ff" opacity="0.45"/><rect x="20" y="110.4" width="1" height="1.3" fill="#ff7b72" opacity="0.45"/><rect x="22" y="110.4" width="4" height="1.3" fill="#79c0ff" opacity="0.45"/><rect x="26" y="110.4" width="1" height="1.3" fill="#e6edf3" opacity="0.45"/><rect x="27" y="110.4" width="13" height="1.3" fill="#e6edf3" opacity="0.45"/><rect x="40" y="110.4" width="1" height="1.3" fill="#e6edf3" opacity="0.45"/><rect x="41" y="110.4" width="3" height="1.3" fill="#ffa657" opacity="0.45"/><rect x="44" y="110.4" width="1" height="1.3" fill="#e6edf3" opacity="0.45"/><rect x="45" y="110.4" width="5" height="1.3" fill="#e6edf3" opacity="0.45"/><rect x="50" y="110.4" width="2" height="1.3" fill="#e6edf3" opacity="0.45"/><rect x="4" y="112.4" width="5" height="1.3" fill="#ff7b72" opacity="0.45"/><rect x="10" y="112.4" width="6" height="1.3" fill="#79c0ff" opacity="0.45"/><rect x="17" y="112.4" width="1" height="1.3" fill="#ff7b72" opacity="0.45"/><rect x="19" y="112.4" width="5" height="1.3" fill="#ff7b72" opacity="0.45"/><rect x="25" y="112.4" width="11" height="1.3" fill="#ffa657" opacity="0.45"/><rect x="36" y="112.4" width="1" height="1.3" fill="#e6edf3" opacity="0.45"/><rect x="37" y="112.4" width="9" height="1.3" fill="#d2a8ff" opacity="0.45"/><rect x="46" y="112.4" width="2" height="1.3" fill="#e6edf3" opacity="0.45"/><rect x="49" y="112.4" width="9" height="1.3" fill="#79c0ff" opacity="0.45"/><rect x="4" y="116.4" width="3" height="1.3" fill="#ffa657" opacity="0.45"/><rect x="7" y="116.4" width="1" height="1.3" fill="#e6edf3" opacity="0.45"/><rect x="8" y="116.4" width="4" height="1.3" fill="#d2a8ff" opacity="0.45"/><rect x="12" y="116.4" width="1" height="1.3" fill="#e6edf3" opacity="0.45"/><rect x="13" y="116.4" width="6" height="1.3" fill="#79c0ff" opacity="0.45"/><rect x="19" y="116.4" width="2" height="1.3" fill="#e6edf3" opacity="0.45"/><rect x="4" y="118.4" width="2" height="1.3" fill="#8b949e" opacity="0.36"/><rect x="7" y="118.4" width="10" height="1.3" fill="#8b949e" opacity="0.36"/><rect x="18" y="118.4" width="7" height="1.3" fill="#8b949e" opacity="0.36"/><rect x="26" y="118.4" width="5" height="1.3" fill="#8b949e" opacity="0.36"/><rect x="32" y="118.4" width="9" height="1.3" fill="#8b949e" opacity="0.36"/><rect x="42" y="118.4" width="6" height="1.3" fill="#8b949e" opacity="0.36"/><rect x="49" y="118.4" width="2" height="1.3" fill="#8b949e" opacity="0.36"/><rect x="4" y="122.4" width="6" height="1.3" fill="#ff7b72" opacity="0.45"/><rect x="11" y="122.4" width="6" height="1.3" fill="#79c0ff" opacity="0.45"/><rect x="17" y="122.4" width="1" height="1.3" fill="#e6edf3" opacity="0.45"/><rect x="2" y="124.4" width="3" height="1.3" fill="#e6edf3" opacity="0.45"/><rect x="2" y="130.4" width="3" height="1.3" fill="#8b949e" opacity="0.36"/><rect x="3" y="132.4" width="1" height="1.3" fill="#8b949e" opacity="0.36"/><rect x="5" y="132.4" width="8" height="1.3" fill="#ff7b72" opacity="0.45"/><rect x="3" y="134.4" width="1" height="1.3" fill="#8b949e" opacity="0.36"/><rect x="5" y="134.4" width="9" height="1.3" fill="#8b949e" opacity="0.36"/><rect x="3" y="136.4" width="1" height="1.3" fill="#8b949e" opacity="0.36"/><rect x="7" y="136.4" width="4" height="1.3" fill="#8b949e" opacity="0.36"/><rect x="3" y="138.4" width="1" height="1.3" fill="#8b949e" opacity="0.36"/><rect x="9" y="138.4" width="8" height="1.3" fill="#8b949e" opacity="0.36"/><rect x="18" y="138.4" width="4" height="1.3" fill="#8b949e" opacity="0.36"/><rect x="23" y="138.4" width="3" height="1.3" fill="#8b949e" opacity="0.36"/><rect x="27" y="138.4" width="8" height="1.3" fill="#8b949e" opacity="0.36"/><rect x="3" y="140.4" width="1" height="1.3" fill="#8b949e" opacity="0.36"/><rect x="9" y="140.4" width="12" height="1.3" fill="#8b949e" opacity="0.36"/><rect x="22" y="140.4" width="2" height="1.3" fill="#8b949e" opacity="0.36"/><rect x="3" y="142.4" width="1" height="1.3" fill="#8b949e" opacity="0.36"/><rect x="9" y="142.4" width="5" height="1.3" fill="#8b949e" opacity="0.36"/><rect x="3" y="144.4" width="1" height="1.3" fill="#8b949e" opacity="0.36"/><rect x="11" y="144.4" width="1" height="1.3" fill="#8b949e" opacity="0.36"/><rect x="13" y="144.4" width="6" height="1.3" fill="#8b949e" opacity="0.36"/><rect x="3" y="146.4" width="1" height="1.3" fill="#8b949e" opacity="0.36"/><rect x="9" y="146.4" width="11" height="1.3" fill="#8b949e" opacity="0.36"/><rect x="3" y="148.4" width="1" height="1.3" fill="#8b949e" opacity="0.36"/><rect x="11" y="148.4" width="1" height="1.3" fill="#8b949e" opacity="0.36"/><rect x="13" y="148.4" width="5" height="1.3" fill="#8b949e" opacity="0.36"/><rect x="19" y="148.4" width="8" height="1.3" fill="#8b949e" opacity="0.36"/><rect x="3" y="150.4" width="1" height="1.3" fill="#8b949e" opacity="0.36"/><rect x="13" y="150.4" width="3" height="1.3" fill="#8b949e" opacity="0.36"/><rect x="17" y="150.4" width="5" height="1.3" fill="#8b949e" opacity="0.36"/><rect x="3" y="152.4" width="1" height="1.3" fill="#8b949e" opacity="0.36"/><rect x="13" y="152.4" width="9" height="1.3" fill="#8b949e" opacity="0.36"/><rect x="23" y="152.4" width="4" height="1.3" fill="#8b949e" opacity="0.36"/><rect x="3" y="154.4" width="1" height="1.3" fill="#8b949e" opacity="0.36"/><rect x="13" y="154.4" width="7" height="1.3" fill="#8b949e" opacity="0.36"/><rect x="3" y="156.4" width="1" height="1.3" fill="#8b949e" opacity="0.36"/><rect x="15" y="156.4" width="5" height="1.3" fill="#8b949e" opacity="0.36"/><rect x="21" y="156.4" width="6" height="1.3" fill="#8b949e" opacity="0.36"/><rect x="3" y="158.4" width="1" height="1.3" fill="#8b949e" opacity="0.36"/><rect x="11" y="158.4" width="1" height="1.3" fill="#8b949e" opacity="0.36"/><rect x="13" y="158.4" width="5" height="1.3" fill="#8b949e" opacity="0.36"/><rect x="19" y="158.4" width="8" height="1.3" fill="#8b949e" opacity="0.36"/><rect x="3" y="160.4" width="1" height="1.3" fill="#8b949e" opacity="0.36"/><rect x="13" y="160.4" width="3" height="1.3" fill="#8b949e" opacity="0.36"/><rect x="17" y="160.4" width="5" height="1.3" fill="#8b949e" opacity="0.36"/><rect x="3" y="162.4" width="1" height="1.3" fill="#8b949e" opacity="0.36"/><rect x="13" y="162.4" width="9" height="1.3" fill="#8b949e" opacity="0.36"/><rect x="23" y="162.4" width="4" height="1.3" fill="#8b949e" opacity="0.36"/><rect x="3" y="164.4" width="1" height="1.3" fill="#8b949e" opacity="0.36"/><rect x="13" y="164.4" width="7" height="1.3" fill="#8b949e" opacity="0.36"/><rect x="3" y="166.4" width="1" height="1.3" fill="#8b949e" opacity="0.36"/><rect x="15" y="166.4" width="5" height="1.3" fill="#8b949e" opacity="0.36"/><rect x="21" y="166.4" width="6" height="1.3" fill="#8b949e" opacity="0.36"/><rect x="3" y="168.4" width="1" height="1.3" fill="#8b949e" opacity="0.36"/><rect x="11" y="168.4" width="1" height="1.3" fill="#8b949e" opacity="0.36"/><rect x="13" y="168.4" width="5" height="1.3" fill="#8b949e" opacity="0.36"/><rect x="19" y="168.4" width="8" height="1.3" fill="#8b949e" opacity="0.36"/><rect x="3" y="170.4" width="1" height="1.3" fill="#8b949e" opacity="0.36"/><rect x="13" y="170.4" width="3" height="1.3" fill="#8b949e" opacity="0.36"/><rect x="17" y="170.4" width="5" height="1.3" fill="#8b949e" opacity="0.36"/><rect x="3" y="172.4" width="1" height="1.3" fill="#8b949e" opacity="0.36"/><rect x="13" y="172.4" width="9" height="1.3" fill="#8b949e" opacity="0.36"/><rect x="23" y="172.4" width="4" height="1.3" fill="#8b949e" opacity="0.36"/><rect x="3" y="174.4" width="1" height="1.3" fill="#8b949e" opacity="0.36"/><rect x="13" y="174.4" width="7" height="1.3" fill="#8b949e" opacity="0.36"/><rect x="3" y="176.4" width="1" height="1.3" fill="#8b949e" opacity="0.36"/><rect x="15" y="176.4" width="5" height="1.3" fill="#8b949e" opacity="0.36"/><rect x="21" y="176.4" width="6" height="1.3" fill="#8b949e" opacity="0.36"/><rect x="3" y="178.4" width="1" height="1.3" fill="#8b949e" opacity="0.36"/><rect x="11" y="178.4" width="1" height="1.3" fill="#8b949e" opacity="0.36"/><rect x="13" y="178.4" width="5" height="1.3" fill="#8b949e" opacity="0.36"/><rect x="19" y="178.4" width="4" height="1.3" fill="#8b949e" opacity="0.36"/><rect x="3" y="180.4" width="1" height="1.3" fill="#8b949e" opacity="0.36"/><rect x="13" y="180.4" width="3" height="1.3" fill="#8b949e" opacity="0.36"/><rect x="17" y="180.4" width="5" height="1.3" fill="#8b949e" opacity="0.36"/><rect x="3" y="182.4" width="1" height="1.3" fill="#8b949e" opacity="0.36"/><rect x="13" y="182.4" width="9" height="1.3" fill="#8b949e" opacity="0.36"/><rect x="23" y="182.4" width="4" height="1.3" fill="#8b949e" opacity="0.36"/><rect x="3" y="184.4" width="1" height="1.3" fill="#8b949e" opacity="0.36"/><rect x="13" y="184.4" width="7" height="1.3" fill="#8b949e" opacity="0.36"/><rect x="3" y="186.4" width="1" height="1.3" fill="#8b949e" opacity="0.36"/><rect x="15" y="186.4" width="5" height="1.3" fill="#8b949e" opacity="0.36"/><rect x="21" y="186.4" width="6" height="1.3" fill="#8b949e" opacity="0.36"/><rect x="3" y="188.4" width="1" height="1.3" fill="#8b949e" opacity="0.36"/><rect x="9" y="188.4" width="10" height="1.3" fill="#8b949e" opacity="0.36"/><rect x="3" y="190.4" width="1" height="1.3" fill="#8b949e" opacity="0.36"/><rect x="11" y="190.4" width="6" height="1.3" fill="#8b949e" opacity="0.36"/><rect x="3" y="192.4" width="1" height="1.3" fill="#8b949e" opacity="0.36"/><rect x="13" y="192.4" width="12" height="1.3" fill="#8b949e" opacity="0.36"/><rect x="26" y="192.4" width="6" height="1.3" fill="#8b949e" opacity="0.36"/><rect x="33" y="192.4" width="3" height="1.3" fill="#8b949e" opacity="0.36"/><rect x="37" y="192.4" width="9" height="1.3" fill="#8b949e" opacity="0.36"/><rect x="47" y="192.4" width="7" height="1.3" fill="#8b949e" opacity="0.36"/><rect x="3" y="194.4" width="2" height="1.3" fill="#8b949e" opacity="0.36"/><rect x="2" y="196.4" width="6" height="1.3" fill="#ff7b72" opacity="0.45"/><rect x="9" y="196.4" width="10" height="1.3" fill="#e6edf3" opacity="0.45"/><rect x="20" y="196.4" width="1" height="1.3" fill="#ff7b72" opacity="0.45"/><rect x="22" y="196.4" width="10" height="1.3" fill="#d2a8ff" opacity="0.45"/><rect x="32" y="196.4" width="1" height="1.3" fill="#e6edf3" opacity="0.45"/><rect x="33" y="196.4" width="5" height="1.3" fill="#ff7b72" opacity="0.45"/><rect x="39" y="196.4" width="1" height="1.3" fill="#e6edf3" opacity="0.45"/><rect x="40" y="196.4" width="3" height="1.3" fill="#ffa657" opacity="0.45"/><rect x="43" y="196.4" width="1" height="1.3" fill="#e6edf3" opacity="0.45"/><rect x="44" y="196.4" width="7" height="1.3" fill="#ffa657" opacity="0.45"/><rect x="51" y="196.4" width="1" height="1.3" fill="#e6edf3" opacity="0.45"/><rect x="53" y="196.4" width="3" height="1.3" fill="#ffa657" opacity="0.45"/><rect x="56" y="196.4" width="1" height="1.3" fill="#e6edf3" opacity="0.45"/><rect x="57" y="196.4" width="2" height="1.3" fill="#ffa657" opacity="0.45"/><rect x="0" y="198.0" width="59" height="2" fill="#8e1519" opacity="0.8"/><rect x="40" y="198.0" width="9" height="2" fill="#f00" opacity="0.85"/><rect x="4" y="198.4" width="5" height="1.3" fill="#ff7b72" opacity="0.15"/><rect x="10" y="198.4" width="9" height="1.3" fill="#79c0ff" opacity="0.15"/><rect x="20" y="198.4" width="1" height="1.3" fill="#ff7b72" opacity="0.15"/><rect x="22" y="198.4" width="4" height="1.3" fill="#79c0ff" opacity="0.15"/><rect x="26" y="198.4" width="1" height="1.3" fill="#e6edf3" opacity="0.15"/><rect x="27" y="198.4" width="13" height="1.3" fill="#e6edf3" opacity="0.15"/><rect x="40" y="198.4" width="1" height="1.3" fill="#e6edf3" opacity="0.15"/><rect x="41" y="198.4" width="3" height="1.3" fill="#ffa657" opacity="0.15"/><rect x="44" y="198.4" width="1" height="1.3" fill="#e6edf3" opacity="0.15"/><rect x="45" y="198.4" width="5" height="1.3" fill="#e6edf3" opacity="0.15"/><rect x="50" y="198.4" width="2" height="1.3" fill="#e6edf3" opacity="0.15"/><rect x="4" y="200.4" width="5" height="1.3" fill="#ff7b72" opacity="0.45"/><rect x="10" y="200.4" width="7" height="1.3" fill="#79c0ff" opacity="0.45"/><rect x="18" y="200.4" width="1" height="1.3" fill="#ff7b72" opacity="0.45"/><rect x="20" y="200.4" width="5" height="1.3" fill="#ff7b72" opacity="0.45"/><rect x="26" y="200.4" width="11" height="1.3" fill="#ffa657" opacity="0.45"/><rect x="37" y="200.4" width="1" height="1.3" fill="#e6edf3" opacity="0.45"/><rect x="38" y="200.4" width="9" height="1.3" fill="#d2a8ff" opacity="0.45"/><rect x="47" y="200.4" width="2" height="1.3" fill="#e6edf3" opacity="0.45"/><rect x="50" y="200.4" width="9" height="1.3" fill="#79c0ff" opacity="0.45"/><rect x="4" y="202.4" width="3" height="1.3" fill="#ffa657" opacity="0.45"/><rect x="7" y="202.4" width="1" height="1.3" fill="#e6edf3" opacity="0.45"/><rect x="8" y="202.4" width="4" height="1.3" fill="#d2a8ff" opacity="0.45"/><rect x="12" y="202.4" width="1" height="1.3" fill="#e6edf3" opacity="0.45"/><rect x="13" y="202.4" width="7" height="1.3" fill="#79c0ff" opacity="0.45"/><rect x="20" y="202.4" width="2" height="1.3" fill="#e6edf3" opacity="0.45"/><rect x="2" y="204.4" width="3" height="1.3" fill="#e6edf3" opacity="0.45"/><rect x="2" y="208.4" width="3" height="1.3" fill="#8b949e" opacity="0.36"/><rect x="3" y="210.4" width="1" height="1.3" fill="#8b949e" opacity="0.36"/><rect x="5" y="210.4" width="8" height="1.3" fill="#ff7b72" opacity="0.45"/><rect x="3" y="212.4" width="1" height="1.3" fill="#8b949e" opacity="0.36"/><rect x="5" y="212.4" width="8" height="1.3" fill="#8b949e" opacity="0.36"/><rect x="3" y="214.4" width="1" height="1.3" fill="#8b949e" opacity="0.36"/><rect x="7" y="214.4" width="4" height="1.3" fill="#8b949e" opacity="0.36"/><rect x="3" y="216.4" width="1" height="1.3" fill="#8b949e" opacity="0.36"/><rect x="9" y="216.4" width="8" height="1.3" fill="#8b949e" opacity="0.36"/><rect x="18" y="216.4" width="4" height="1.3" fill="#8b949e" opacity="0.36"/><rect x="23" y="216.4" width="6" height="1.3" fill="#8b949e" opacity="0.36"/><rect x="30" y="216.4" width="6" height="1.3" fill="#8b949e" opacity="0.36"/><rect x="37" y="216.4" width="1" height="1.3" fill="#8b949e" opacity="0.36"/><rect x="3" y="218.4" width="1" height="1.3" fill="#8b949e" opacity="0.36"/><rect x="9" y="218.4" width="12" height="1.3" fill="#8b949e" opacity="0.36"/><rect x="22" y="218.4" width="2" height="1.3" fill="#8b949e" opacity="0.36"/><rect x="3" y="220.4" width="1" height="1.3" fill="#8b949e" opacity="0.36"/><rect x="9" y="220.4" width="5" height="1.3" fill="#8b949e" opacity="0.36"/><rect x="3" y="222.4" width="1" height="1.3" fill="#8b949e" opacity="0.36"/><rect x="11" y="222.4" width="1" height="1.3" fill="#8b949e" opacity="0.36"/><rect x="13" y="222.4" width="6" height="1.3" fill="#8b949e" opacity="0.36"/><rect x="3" y="224.4" width="1" height="1.3" fill="#8b949e" opacity="0.36"/><rect x="9" y="224.4" width="11" height="1.3" fill="#8b949e" opacity="0.36"/><rect x="3" y="226.4" width="1" height="1.3" fill="#8b949e" opacity="0.36"/><rect x="11" y="226.4" width="1" height="1.3" fill="#8b949e" opacity="0.36"/><rect x="13" y="226.4" width="5" height="1.3" fill="#8b949e" opacity="0.36"/><rect x="19" y="226.4" width="8" height="1.3" fill="#8b949e" opacity="0.36"/><rect x="3" y="228.4" width="1" height="1.3" fill="#8b949e" opacity="0.36"/><rect x="13" y="228.4" width="3" height="1.3" fill="#8b949e" opacity="0.36"/><rect x="17" y="228.4" width="5" height="1.3" fill="#8b949e" opacity="0.36"/><rect x="3" y="230.4" width="1" height="1.3" fill="#8b949e" opacity="0.36"/><rect x="13" y="230.4" width="9" height="1.3" fill="#8b949e" opacity="0.36"/><rect x="23" y="230.4" width="4" height="1.3" fill="#8b949e" opacity="0.36"/><rect x="3" y="232.4" width="1" height="1.3" fill="#8b949e" opacity="0.36"/><rect x="13" y="232.4" width="7" height="1.3" fill="#8b949e" opacity="0.36"/><rect x="3" y="234.4" width="1" height="1.3" fill="#8b949e" opacity="0.36"/><rect x="15" y="234.4" width="5" height="1.3" fill="#8b949e" opacity="0.36"/><rect x="21" y="234.4" width="6" height="1.3" fill="#8b949e" opacity="0.36"/><rect x="3" y="236.4" width="1" height="1.3" fill="#8b949e" opacity="0.36"/><rect x="11" y="236.4" width="1" height="1.3" fill="#8b949e" opacity="0.36"/><rect x="13" y="236.4" width="5" height="1.3" fill="#8b949e" opacity="0.36"/><rect x="19" y="236.4" width="8" height="1.3" fill="#8b949e" opacity="0.36"/><rect x="3" y="238.4" width="1" height="1.3" fill="#8b949e" opacity="0.36"/><rect x="13" y="238.4" width="3" height="1.3" fill="#8b949e" opacity="0.36"/><rect x="17" y="238.4" width="5" height="1.3" fill="#8b949e" opacity="0.36"/><rect x="3" y="240.4" width="1" height="1.3" fill="#8b949e" opacity="0.36"/><rect x="13" y="240.4" width="9" height="1.3" fill="#8b949e" opacity="0.36"/><rect x="23" y="240.4" width="4" height="1.3" fill="#8b949e" opacity="0.36"/><rect x="3" y="242.4" width="1" height="1.3" fill="#8b949e" opacity="0.36"/><rect x="13" y="242.4" width="7" height="1.3" fill="#8b949e" opacity="0.36"/><rect x="3" y="244.4" width="1" height="1.3" fill="#8b949e" opacity="0.36"/><rect x="15" y="244.4" width="5" height="1.3" fill="#8b949e" opacity="0.36"/><rect x="21" y="244.4" width="6" height="1.3" fill="#8b949e" opacity="0.36"/><rect x="3" y="246.4" width="1" height="1.3" fill="#8b949e" opacity="0.36"/><rect x="11" y="246.4" width="1" height="1.3" fill="#8b949e" opacity="0.36"/><rect x="13" y="246.4" width="5" height="1.3" fill="#8b949e" opacity="0.36"/><rect x="19" y="246.4" width="8" height="1.3" fill="#8b949e" opacity="0.36"/><rect x="3" y="248.4" width="1" height="1.3" fill="#8b949e" opacity="0.36"/><rect x="13" y="248.4" width="3" height="1.3" fill="#8b949e" opacity="0.36"/><rect x="17" y="248.4" width="5" height="1.3" fill="#8b949e" opacity="0.36"/><rect x="3" y="250.4" width="1" height="1.3" fill="#8b949e" opacity="0.36"/><rect x="13" y="250.4" width="9" height="1.3" fill="#8b949e" opacity="0.36"/><rect x="23" y="250.4" width="4" height="1.3" fill="#8b949e" opacity="0.36"/><rect x="3" y="252.4" width="1" height="1.3" fill="#8b949e" opacity="0.36"/><rect x="13" y="252.4" width="7" height="1.3" fill="#8b949e" opacity="0.36"/><rect x="3" y="254.4" width="1" height="1.3" fill="#8b949e" opacity="0.36"/><rect x="15" y="254.4" width="5" height="1.3" fill="#8b949e" opacity="0.36"/><rect x="21" y="254.4" width="6" height="1.3" fill="#8b949e" opacity="0.36"/><rect x="3" y="256.4" width="1" height="1.3" fill="#8b949e" opacity="0.36"/><rect x="11" y="256.4" width="1" height="1.3" fill="#8b949e" opacity="0.36"/><rect x="13" y="256.4" width="5" height="1.3" fill="#8b949e" opacity="0.36"/><rect x="19" y="256.4" width="4" height="1.3" fill="#8b949e" opacity="0.36"/><rect x="3" y="258.4" width="1" height="1.3" fill="#8b949e" opacity="0.36"/><rect x="13" y="258.4" width="3" height="1.3" fill="#8b949e" opacity="0.36"/><rect x="17" y="258.4" width="5" height="1.3" fill="#8b949e" opacity="0.36"/><rect x="3" y="260.4" width="1" height="1.3" fill="#8b949e" opacity="0.36"/><rect x="13" y="260.4" width="9" height="1.3" fill="#8b949e" opacity="0.36"/><rect x="23" y="260.4" width="4" height="1.3" fill="#8b949e" opacity="0.36"/><rect x="3" y="262.4" width="1" height="1.3" fill="#8b949e" opacity="0.36"/><rect x="13" y="262.4" width="7" height="1.3" fill="#8b949e" opacity="0.36"/><rect x="3" y="264.4" width="1" height="1.3" fill="#8b949e" opacity="0.36"/><rect x="15" y="264.4" width="5" height="1.3" fill="#8b949e" opacity="0.36"/><rect x="21" y="264.4" width="6" height="1.3" fill="#8b949e" opacity="0.36"/><rect x="3" y="266.4" width="1" height="1.3" fill="#8b949e" opacity="0.36"/><rect x="9" y="266.4" width="10" height="1.3" fill="#8b949e" opacity="0.36"/><rect x="3" y="268.4" width="1" height="1.3" fill="#8b949e" opacity="0.36"/><rect x="11" y="268.4" width="6" height="1.3" fill="#8b949e" opacity="0.36"/><rect x="3" y="270.4" width="1" height="1.3" fill="#8b949e" opacity="0.36"/><rect x="13" y="270.4" width="12" height="1.3" fill="#8b949e" opacity="0.36"/><rect x="26" y="270.4" width="6" height="1.3" fill="#8b949e" opacity="0.36"/><rect x="33" y="270.4" width="6" height="1.3" fill="#8b949e" opacity="0.36"/><rect x="3" y="272.4" width="1" height="1.3" fill="#8b949e" opacity="0.36"/><rect x="13" y="272.4" width="12" height="1.3" fill="#8b949e" opacity="0.36"/><rect x="26" y="272.4" width="6" height="1.3" fill="#8b949e" opacity="0.36"/><rect x="33" y="272.4" width="6" height="1.3" fill="#8b949e" opacity="0.36"/><rect x="3" y="274.4" width="2" height="1.3" fill="#8b949e" opacity="0.36"/><rect x="0" y="276.0" width="59" height="2" fill="#8e1519" opacity="0.8"/><rect x="2" y="276.4" width="6" height="1.3" fill="#ff7b72" opacity="0.15"/><rect x="9" y="276.4" width="15" height="1.3" fill="#e6edf3" opacity="0.15"/><rect x="25" y="276.4" width="1" height="1.3" fill="#ff7b72" opacity="0.15"/><rect x="27" y="276.4" width="10" height="1.3" fill="#d2a8ff" opacity="0.15"/><rect x="37" y="276.4" width="1" height="1.3" fill="#e6edf3" opacity="0.15"/><rect x="38" y="276.4" width="5" height="1.3" fill="#ff7b72" opacity="0.15"/><rect x="44" y="276.4" width="1" height="1.3" fill="#e6edf3" opacity="0.15"/><rect x="45" y="276.4" width="3" height="1.3" fill="#ffa657" opacity="0.15"/><rect x="48" y="276.4" width="1" height="1.3" fill="#e6edf3" opacity="0.15"/><rect x="49" y="276.4" width="7" height="1.3" fill="#ffa657" opacity="0.15"/><rect x="56" y="276.4" width="1" height="1.3" fill="#e6edf3" opacity="0.15"/><rect x="58" y="276.4" width="1" height="1.3" fill="#ffa657" opacity="0.15"/><rect x="4" y="278.4" width="5" height="1.3" fill="#ff7b72" opacity="0.45"/><rect x="10" y="278.4" width="9" height="1.3" fill="#79c0ff" opacity="0.45"/><rect x="20" y="278.4" width="1" height="1.3" fill="#ff7b72" opacity="0.45"/><rect x="22" y="278.4" width="4" height="1.3" fill="#79c0ff" opacity="0.45"/><rect x="26" y="278.4" width="1" height="1.3" fill="#e6edf3" opacity="0.45"/><rect x="27" y="278.4" width="13" height="1.3" fill="#e6edf3" opacity="0.45"/><rect x="40" y="278.4" width="1" height="1.3" fill="#e6edf3" opacity="0.45"/><rect x="41" y="278.4" width="3" height="1.3" fill="#ffa657" opacity="0.45"/><rect x="44" y="278.4" width="1" height="1.3" fill="#e6edf3" opacity="0.45"/><rect x="45" y="278.4" width="5" height="1.3" fill="#e6edf3" opacity="0.45"/><rect x="50" y="278.4" width="2" height="1.3" fill="#e6edf3" opacity="0.45"/><rect x="4" y="280.4" width="5" height="1.3" fill="#ff7b72" opacity="0.45"/><rect x="10" y="280.4" width="6" height="1.3" fill="#79c0ff" opacity="0.45"/><rect x="17" y="280.4" width="1" height="1.3" fill="#ff7b72" opacity="0.45"/><rect x="19" y="280.4" width="5" height="1.3" fill="#ff7b72" opacity="0.45"/><rect x="25" y="280.4" width="11" height="1.3" fill="#ffa657" opacity="0.45"/><rect x="36" y="280.4" width="1" height="1.3" fill="#e6edf3" opacity="0.45"/><rect x="37" y="280.4" width="9" height="1.3" fill="#d2a8ff" opacity="0.45"/><rect x="46" y="280.4" width="2" height="1.3" fill="#e6edf3" opacity="0.45"/><rect x="49" y="280.4" width="9" height="1.3" fill="#79c0ff" opacity="0.45"/><rect x="4" y="282.4" width="3" height="1.3" fill="#ffa657" opacity="0.45"/><rect x="7" y="282.4" width="1" height="1.3" fill="#e6edf3" opacity="0.45"/><rect x="8" y="282.4" width="4" height="1.3" fill="#d2a8ff" opacity="0.45"/><rect x="12" y="282.4" width="1" height="1.3" fill="#e6edf3" opacity="0.45"/><rect x="13" y="282.4" width="6" height="1.3" fill="#79c0ff" opacity="0.45"/><rect x="19" y="282.4" width="2" height="1.3" fill="#e6edf3" opacity="0.45"/><rect x="2" y="284.4" width="3" height="1.3" fill="#e6edf3" opacity="0.45"/><rect x="2" y="288.4" width="3" height="1.3" fill="#8b949e" opacity="0.36"/><rect x="3" y="290.4" width="1" height="1.3" fill="#8b949e" opacity="0.36"/><rect x="5" y="290.4" width="8" height="1.3" fill="#ff7b72" opacity="0.45"/><rect x="3" y="292.4" width="1" height="1.3" fill="#8b949e" opacity="0.36"/><rect x="5" y="292.4" width="12" height="1.3" fill="#8b949e" opacity="0.36"/><rect x="3" y="294.4" width="1" height="1.3" fill="#8b949e" opacity="0.36"/><rect x="7" y="294.4" width="5" height="1.3" fill="#8b949e" opacity="0.36"/><rect x="3" y="296.4" width="1" height="1.3" fill="#8b949e" opacity="0.36"/><rect x="9" y="296.4" width="8" height="1.3" fill="#8b949e" opacity="0.36"/><rect x="18" y="296.4" width="3" height="1.3" fill="#8b949e" opacity="0.36"/><rect x="22" y="296.4" width="2" height="1.3" fill="#8b949e" opacity="0.36"/><rect x="25" y="296.4" width="6" height="1.3" fill="#8b949e" opacity="0.36"/><rect x="32" y="296.4" width="9" height="1.3" fill="#8b949e" opacity="0.36"/><rect x="3" y="298.4" width="1" height="1.3" fill="#8b949e" opacity="0.36"/><rect x="9" y="298.4" width="12" height="1.3" fill="#8b949e" opacity="0.36"/><rect x="22" y="298.4" width="2" height="1.3" fill="#8b949e" opacity="0.36"/><rect x="3" y="300.4" width="1" height="1.3" fill="#8b949e" opacity="0.36"/><rect x="9" y="300.4" width="5" height="1.3" fill="#8b949e" opacity="0.36"/><rect x="3" y="302.4" width="1" height="1.3" fill="#8b949e" opacity="0.36"/><rect x="11" y="302.4" width="1" height="1.3" fill="#8b949e" opacity="0.36"/><rect x="13" y="302.4" width="6" height="1.3" fill="#8b949e" opacity="0.36"/><rect x="3" y="304.4" width="1" height="1.3" fill="#8b949e" opacity="0.36"/><rect x="9" y="304.4" width="12" height="1.3" fill="#8b949e" opacity="0.36"/><rect x="3" y="306.4" width="1" height="1.3" fill="#8b949e" opacity="0.36"/><rect x="11" y="306.4" width="9" height="1.3" fill="#8b949e" opacity="0.36"/><rect x="21" y="306.4" width="4" height="1.3" fill="#8b949e" opacity="0.36"/><rect x="3" y="308.4" width="1" height="1.3" fill="#8b949e" opacity="0.36"/><rect x="11" y="308.4" width="8" height="1.3" fill="#8b949e" opacity="0.36"/><rect x="3" y="310.4" width="1" height="1.3" fill="#8b949e" opacity="0.36"/><rect x="13" y="310.4" width="17" height="1.3" fill="#8b949e" opacity="0.36"/><rect x="3" y="312.4" width="1" height="1.3" fill="#8b949e" opacity="0.36"/><rect x="15" y="312.4" width="7" height="1.3" fill="#8b949e" opacity="0.36"/><rect x="3" y="314.4" width="1" height="1.3" fill="#8b949e" opacity="0.36"/><rect x="17" y="314.4" width="5" height="1.3" fill="#8b949e" opacity="0.36"/><rect x="23" y="314.4" width="6" height="1.3" fill="#8b949e" opacity="0.36"/><rect x="3" y="316.4" width="1" height="1.3" fill="#8b949e" opacity="0.36"/><rect x="17" y="316.4" width="11" height="1.3" fill="#8b949e" opacity="0.36"/><rect x="3" y="318.4" width="1" height="1.3" fill="#8b949e" opacity="0.36"/><rect x="19" y="318.4" width="9" height="1.3" fill="#8b949e" opacity="0.36"/><rect x="3" y="320.4" width="1" height="1.3" fill="#8b949e" opacity="0.36"/><rect x="21" y="320.4" width="5" height="1.3" fill="#8b949e" opacity="0.36"/><rect x="27" y="320.4" width="6" height="1.3" fill="#8b949e" opacity="0.36"/><rect x="3" y="322.4" width="1" height="1.3" fill="#8b949e" opacity="0.36"/><rect x="19" y="322.4" width="9" height="1.3" fill="#8b949e" opacity="0.36"/><rect x="3" y="324.4" width="1" height="1.3" fill="#8b949e" opacity="0.36"/><rect x="21" y="324.4" width="5" height="1.3" fill="#8b949e" opacity="0.36"/><rect x="27" y="324.4" width="6" height="1.3" fill="#8b949e" opacity="0.36"/><rect x="3" y="326.4" width="1" height="1.3" fill="#8b949e" opacity="0.36"/><rect x="19" y="326.4" width="9" height="1.3" fill="#8b949e" opacity="0.36"/><rect x="3" y="328.4" width="1" height="1.3" fill="#8b949e" opacity="0.36"/><rect x="21" y="328.4" width="5" height="1.3" fill="#8b949e" opacity="0.36"/><rect x="27" y="328.4" width="6" height="1.3" fill="#8b949e" opacity="0.36"/><rect x="3" y="330.4" width="1" height="1.3" fill="#8b949e" opacity="0.36"/><rect x="23" y="330.4" width="12" height="1.3" fill="#8b949e" opacity="0.36"/><rect x="36" y="330.4" width="3" height="1.3" fill="#8b949e" opacity="0.36"/><rect x="40" y="330.4" width="8" height="1.3" fill="#8b949e" opacity="0.36"/><rect x="49" y="330.4" width="2" height="1.3" fill="#8b949e" opacity="0.36"/><rect x="52" y="330.4" width="3" height="1.3" fill="#8b949e" opacity="0.36"/><rect x="56" y="330.4" width="3" height="1.3" fill="#8b949e" opacity="0.36"/><rect x="3" y="332.4" width="1" height="1.3" fill="#8b949e" opacity="0.36"/><rect x="19" y="332.4" width="2" height="1.3" fill="#8b949e" opacity="0.36"/><rect x="3" y="334.4" width="1" height="1.3" fill="#8b949e" opacity="0.36"/><rect x="21" y="334.4" width="5" height="1.3" fill="#8b949e" opacity="0.36"/><rect x="27" y="334.4" width="6" height="1.3" fill="#8b949e" opacity="0.36"/><rect x="3" y="336.4" width="1" height="1.3" fill="#8b949e" opacity="0.36"/><rect x="21" y="336.4" width="8" height="1.3" fill="#8b949e" opacity="0.36"/><rect x="30" y="336.4" width="3" height="1.3" fill="#8b949e" opacity="0.36"/><rect x="3" y="338.4" width="1" height="1.3" fill="#8b949e" opacity="0.36"/><rect x="19" y="338.4" width="2" height="1.3" fill="#8b949e" opacity="0.36"/><rect x="3" y="340.4" width="1" height="1.3" fill="#8b949e" opacity="0.36"/><rect x="21" y="340.4" width="5" height="1.3" fill="#8b949e" opacity="0.36"/><rect x="27" y="340.4" width="6" height="1.3" fill="#8b949e" opacity="0.36"/><rect x="3" y="342.4" width="1" height="1.3" fill="#8b949e" opacity="0.36"/><rect x="19" y="342.4" width="5" height="1.3" fill="#8b949e" opacity="0.36"/><rect x="3" y="344.4" width="1" height="1.3" fill="#8b949e" opacity="0.36"/><rect x="21" y="344.4" width="5" height="1.3" fill="#8b949e" opacity="0.36"/><rect x="27" y="344.4" width="6" height="1.3" fill="#8b949e" opacity="0.36"/><rect x="3" y="346.4" width="1" height="1.3" fill="#8b949e" opacity="0.36"/><rect x="11" y="346.4" width="9" height="1.3" fill="#8b949e" opacity="0.36"/><rect x="21" y="346.4" width="4" height="1.3" fill="#8b949e" opacity="0.36"/><rect x="3" y="348.4" width="1" height="1.3" fill="#8b949e" opacity="0.36"/><rect x="11" y="348.4" width="8" height="1.3" fill="#8b949e" opacity="0.36"/><rect x="3" y="350.4" width="1" height="1.3" fill="#8b949e" opacity="0.36"/><rect x="13" y="350.4" width="17" height="1.3" fill="#8b949e" opacity="0.36"/><rect x="3" y="352.4" width="1" height="1.3" fill="#8b949e" opacity="0.36"/><rect x="15" y="352.4" width="7" height="1.3" fill="#8b949e" opacity="0.36"/><rect x="3" y="354.4" width="1" height="1.3" fill="#8b949e" opacity="0.36"/><rect x="17" y="354.4" width="5" height="1.3" fill="#8b949e" opacity="0.36"/><rect x="23" y="354.4" width="6" height="1.3" fill="#8b949e" opacity="0.36"/><rect x="3" y="356.4" width="1" height="1.3" fill="#8b949e" opacity="0.36"/><rect x="17" y="356.4" width="11" height="1.3" fill="#8b949e" opacity="0.36"/><rect x="3" y="358.4" width="1" height="1.3" fill="#8b949e" opacity="0.36"/><rect x="19" y="358.4" width="9" height="1.3" fill="#8b949e" opacity="0.36"/><rect x="3" y="360.4" width="1" height="1.3" fill="#8b949e" opacity="0.36"/><rect x="21" y="360.4" width="5" height="1.3" fill="#8b949e" opacity="0.36"/><rect x="27" y="360.4" width="6" height="1.3" fill="#8b949e" opacity="0.36"/><rect x="3" y="362.4" width="1" height="1.3" fill="#8b949e" opacity="0.36"/><rect x="19" y="362.4" width="9" height="1.3" fill="#8b949e" opacity="0.36"/><rect x="3" y="364.4" width="1" height="1.3" fill="#8b949e" opacity="0.36"/><rect x="21" y="364.4" width="5" height="1.3" fill="#8b949e" opacity="0.36"/><rect x="27" y="364.4" width="6" height="1.3" fill="#8b949e" opacity="0.36"/><rect x="3" y="366.4" width="1" height="1.3" fill="#8b949e" opacity="0.36"/><rect x="19" y="366.4" width="9" height="1.3" fill="#8b949e" opacity="0.36"/><rect x="3" y="368.4" width="1" height="1.3" fill="#8b949e" opacity="0.36"/><rect x="9" y="368.4" width="10" height="1.3" fill="#8b949e" opacity="0.36"/><rect x="3" y="370.4" width="1" height="1.3" fill="#8b949e" opacity="0.36"/><rect x="11" y="370.4" width="6" height="1.3" fill="#8b949e" opacity="0.36"/><rect x="3" y="372.4" width="1" height="1.3" fill="#8b949e" opacity="0.36"/><rect x="13" y="372.4" width="12" height="1.3" fill="#8b949e" opacity="0.36"/><rect x="26" y="372.4" width="6" height="1.3" fill="#8b949e" opacity="0.36"/><rect x="33" y="372.4" width="5" height="1.3" fill="#8b949e" opacity="0.36"/><rect x="39" y="372.4" width="2" height="1.3" fill="#8b949e" opacity="0.36"/><rect x="42" y="372.4" width="6" height="1.3" fill="#8b949e" opacity="0.36"/><rect x="3" y="374.4" width="2" height="1.3" fill="#8b949e" opacity="0.36"/><rect x="0" y="376.0" width="59" height="2" fill="#8e1519" opacity="0.8"/><rect x="2" y="376.4" width="6" height="1.3" fill="#ff7b72" opacity="0.15"/><rect x="9" y="376.4" width="10" height="1.3" fill="#e6edf3" opacity="0.15"/><rect x="20" y="376.4" width="1" height="1.3" fill="#ff7b72" opacity="0.15"/><rect x="22" y="376.4" width="10" height="1.3" fill="#d2a8ff" opacity="0.15"/><rect x="32" y="376.4" width="1" height="1.3" fill="#e6edf3" opacity="0.15"/><rect x="33" y="376.4" width="5" height="1.3" fill="#ff7b72" opacity="0.15"/><rect x="39" y="376.4" width="1" height="1.3" fill="#e6edf3" opacity="0.15"/><rect x="40" y="376.4" width="3" height="1.3" fill="#ffa657" opacity="0.15"/><rect x="43" y="376.4" width="1" height="1.3" fill="#e6edf3" opacity="0.15"/><rect x="44" y="376.4" width="7" height="1.3" fill="#ffa657" opacity="0.15"/><rect x="51" y="376.4" width="1" height="1.3" fill="#e6edf3" opacity="0.15"/><rect x="53" y="376.4" width="3" height="1.3" fill="#ffa657" opacity="0.15"/><rect x="56" y="376.4" width="1" height="1.3" fill="#e6edf3" opacity="0.15"/><rect x="57" y="376.4" width="2" height="1.3" fill="#ffa657" opacity="0.15"/><rect x="4" y="378.4" width="5" height="1.3" fill="#ff7b72" opacity="0.45"/><rect x="10" y="378.4" width="1" height="1.3" fill="#e6edf3" opacity="0.45"/><rect x="12" y="378.4" width="6" height="1.3" fill="#e6edf3" opacity="0.45"/><rect x="18" y="378.4" width="1" height="1.3" fill="#e6edf3" opacity="0.45"/><rect x="20" y="378.4" width="3" height="1.3" fill="#e6edf3" opacity="0.45"/><rect x="23" y="378.4" width="9" height="1.3" fill="#79c0ff" opacity="0.45"/><rect x="33" y="378.4" width="1" height="1.3" fill="#e6edf3" opacity="0.45"/><rect x="35" y="378.4" width="1" height="1.3" fill="#ff7b72" opacity="0.45"/><rect x="37" y="378.4" width="3" height="1.3" fill="#ffa657" opacity="0.45"/><rect x="40" y="378.4" width="1" height="1.3" fill="#e6edf3" opacity="0.45"/><rect x="41" y="378.4" width="4" height="1.3" fill="#e6edf3" opacity="0.45"/><rect x="45" y="378.4" width="1" height="1.3" fill="#e6edf3" opacity="0.45"/><rect x="4" y="380.4" width="5" height="1.3" fill="#ff7b72" opacity="0.45"/><rect x="10" y="380.4" width="6" height="1.3" fill="#79c0ff" opacity="0.45"/><rect x="17" y="380.4" width="1" height="1.3" fill="#ff7b72" opacity="0.45"/><rect x="19" y="380.4" width="1" height="1.3" fill="#79c0ff" opacity="0.45"/><rect x="20" y="380.4" width="1" height="1.3" fill="#e6edf3" opacity="0.45"/><rect x="0" y="384.0" width="59" height="2" fill="#8e1519" opacity="0.8"/><rect x="14" y="384.0" width="20" height="2" fill="#f00" opacity="0.85"/><rect x="4" y="384.4" width="5" height="1.3" fill="#ff7b72" opacity="0.15"/><rect x="10" y="384.4" width="16" height="1.3" fill="#e6edf3" opacity="0.15"/><rect x="27" y="384.4" width="1" height="1.3" fill="#ff7b72" opacity="0.15"/><rect x="29" y="384.4" width="5" height="1.3" fill="#ff7b72" opacity="0.15"/><rect x="35" y="384.4" width="11" height="1.3" fill="#ffa657" opacity="0.15"/><rect x="46" y="384.4" width="1" height="1.3" fill="#e6edf3" opacity="0.15"/><rect x="47" y="384.4" width="10" height="1.3" fill="#d2a8ff" opacity="0.15"/><rect x="57" y="384.4" width="2" height="1.3" fill="#e6edf3" opacity="0.15"/><rect x="4" y="386.4" width="3" height="1.3" fill="#ffa657" opacity="0.45"/><rect x="7" y="386.4" width="1" height="1.3" fill="#e6edf3" opacity="0.45"/><rect x="8" y="386.4" width="4" height="1.3" fill="#d2a8ff" opacity="0.45"/><rect x="12" y="386.4" width="2" height="1.3" fill="#e6edf3" opacity="0.45"/><rect x="15" y="386.4" width="6" height="1.3" fill="#79c0ff" opacity="0.45"/><rect x="21" y="386.4" width="1" height="1.3" fill="#e6edf3" opacity="0.45"/><rect x="23" y="386.4" width="16" height="1.3" fill="#e6edf3" opacity="0.45"/><rect x="40" y="386.4" width="3" height="1.3" fill="#e6edf3" opacity="0.45"/><rect x="0" y="390.0" width="59" height="2" fill="#8e1519" opacity="0.8"/><rect x="4" y="390.4" width="6" height="1.3" fill="#ff7b72" opacity="0.15"/><rect x="11" y="390.4" width="3" height="1.3" fill="#ffa657" opacity="0.15"/><rect x="14" y="390.4" width="1" height="1.3" fill="#e6edf3" opacity="0.15"/><rect x="15" y="390.4" width="4" height="1.3" fill="#d2a8ff" opacity="0.15"/><rect x="19" y="390.4" width="1" height="1.3" fill="#e6edf3" opacity="0.15"/><rect x="20" y="390.4" width="6" height="1.3" fill="#79c0ff" opacity="0.15"/><rect x="26" y="390.4" width="2" height="1.3" fill="#e6edf3" opacity="0.15"/><rect x="2" y="392.4" width="3" height="1.3" fill="#e6edf3" opacity="0.45"/><rect x="2" y="396.4" width="3" height="1.3" fill="#8b949e" opacity="0.36"/><rect x="3" y="398.4" width="1" height="1.3" fill="#8b949e" opacity="0.36"/><rect x="5" y="398.4" width="8" height="1.3" fill="#ff7b72" opacity="0.45"/><rect x="3" y="400.4" width="1" height="1.3" fill="#8b949e" opacity="0.36"/><rect x="5" y="400.4" width="14" height="1.3" fill="#8b949e" opacity="0.36"/><rect x="3" y="402.4" width="1" height="1.3" fill="#8b949e" opacity="0.36"/><rect x="7" y="402.4" width="5" height="1.3" fill="#8b949e" opacity="0.36"/><rect x="3" y="404.4" width="1" height="1.3" fill="#8b949e" opacity="0.36"/><rect x="9" y="404.4" width="8" height="1.3" fill="#8b949e" opacity="0.36"/><rect x="18" y="404.4" width="5" height="1.3" fill="#8b949e" opacity="0.36"/><rect x="24" y="404.4" width="6" height="1.3" fill="#8b949e" opacity="0.36"/><rect x="31" y="404.4" width="2" height="1.3" fill="#8b949e" opacity="0.36"/><rect x="34" y="404.4" width="8" height="1.3" fill="#8b949e" opacity="0.36"/><rect x="43" y="404.4" width="9" height="1.3" fill="#8b949e" opacity="0.36"/><rect x="3" y="406.4" width="1" height="1.3" fill="#8b949e" opacity="0.36"/><rect x="9" y="406.4" width="12" height="1.3" fill="#8b949e" opacity="0.36"/><rect x="22" y="406.4" width="2" height="1.3" fill="#8b949e" opacity="0.36"/><rect x="3" y="408.4" width="1" height="1.3" fill="#8b949e" opacity="0.36"/><rect x="9" y="408.4" width="5" height="1.3" fill="#8b949e" opacity="0.36"/><rect x="3" y="410.4" width="1" height="1.3" fill="#8b949e" opacity="0.36"/><rect x="11" y="410.4" width="1" height="1.3" fill="#8b949e" opacity="0.36"/><rect x="13" y="410.4" width="6" height="1.3" fill="#8b949e" opacity="0.36"/><rect x="3" y="412.4" width="1" height="1.3" fill="#8b949e" opacity="0.36"/><rect x="9" y="412.4" width="12" height="1.3" fill="#8b949e" opacity="0.36"/><rect x="3" y="414.4" width="1" height="1.3" fill="#8b949e" opacity="0.36"/><rect x="11" y="414.4" width="9" height="1.3" fill="#8b949e" opacity="0.36"/><rect x="21" y="414.4" width="4" height="1.3" fill="#8b949e" opacity="0.36"/><rect x="3" y="416.4" width="1" height="1.3" fill="#8b949e" opacity="0.36"/><rect x="11" y="416.4" width="8" height="1.3" fill="#8b949e" opacity="0.36"/><rect x="3" y="418.4" width="1" height="1.3" fill="#8b949e" opacity="0.36"/><rect x="13" y="418.4" width="17" height="1.3" fill="#8b949e" opacity="0.36"/><rect x="3" y="420.4" width="1" height="1.3" fill="#8b949e" opacity="0.36"/><rect x="15" y="420.4" width="7" height="1.3" fill="#8b949e" opacity="0.36"/><rect x="3" y="422.4" width="1" height="1.3" fill="#8b949e" opacity="0.36"/><rect x="17" y="422.4" width="5" height="1.3" fill="#8b949e" opacity="0.36"/><rect x="23" y="422.4" width="6" height="1.3" fill="#8b949e" opacity="0.36"/><rect x="3" y="424.4" width="1" height="1.3" fill="#8b949e" opacity="0.36"/><rect x="17" y="424.4" width="11" height="1.3" fill="#8b949e" opacity="0.36"/><rect x="3" y="426.4" width="1" height="1.3" fill="#8b949e" opacity="0.36"/><rect x="19" y="426.4" width="9" height="1.3" fill="#8b949e" opacity="0.36"/><rect x="3" y="428.4" width="1" height="1.3" fill="#8b949e" opacity="0.36"/><rect x="21" y="428.4" width="5" height="1.3" fill="#8b949e" opacity="0.36"/><rect x="27" y="428.4" width="6" height="1.3" fill="#8b949e" opacity="0.36"/><rect x="3" y="430.4" width="1" height="1.3" fill="#8b949e" opacity="0.36"/><rect x="19" y="430.4" width="9" height="1.3" fill="#8b949e" opacity="0.36"/><rect x="3" y="432.4" width="1" height="1.3" fill="#8b949e" opacity="0.36"/><rect x="21" y="432.4" width="5" height="1.3" fill="#8b949e" opacity="0.36"/><rect x="27" y="432.4" width="6" height="1.3" fill="#8b949e" opacity="0.36"/><rect x="3" y="434.4" width="1" height="1.3" fill="#8b949e" opacity="0.36"/><rect x="19" y="434.4" width="9" height="1.3" fill="#8b949e" opacity="0.36"/><rect x="3" y="436.4" width="1" height="1.3" fill="#8b949e" opacity="0.36"/><rect x="21" y="436.4" width="5" height="1.3" fill="#8b949e" opacity="0.36"/><rect x="27" y="436.4" width="6" height="1.3" fill="#8b949e" opacity="0.36"/><rect x="3" y="438.4" width="1" height="1.3" fill="#8b949e" opacity="0.36"/><rect x="23" y="438.4" width="12" height="1.3" fill="#8b949e" opacity="0.36"/><rect x="36" y="438.4" width="3" height="1.3" fill="#8b949e" opacity="0.36"/><rect x="40" y="438.4" width="8" height="1.3" fill="#8b949e" opacity="0.36"/><rect x="49" y="438.4" width="2" height="1.3" fill="#8b949e" opacity="0.36"/><rect x="52" y="438.4" width="3" height="1.3" fill="#8b949e" opacity="0.36"/><rect x="56" y="438.4" width="3" height="1.3" fill="#8b949e" opacity="0.36"/><rect x="3" y="440.4" width="1" height="1.3" fill="#8b949e" opacity="0.36"/><rect x="19" y="440.4" width="2" height="1.3" fill="#8b949e" opacity="0.36"/><rect x="3" y="442.4" width="1" height="1.3" fill="#8b949e" opacity="0.36"/><rect x="21" y="442.4" width="5" height="1.3" fill="#8b949e" opacity="0.36"/><rect x="27" y="442.4" width="6" height="1.3" fill="#8b949e" opacity="0.36"/><rect x="3" y="444.4" width="1" height="1.3" fill="#8b949e" opacity="0.36"/><rect x="21" y="444.4" width="8" height="1.3" fill="#8b949e" opacity="0.36"/><rect x="30" y="444.4" width="3" height="1.3" fill="#8b949e" opacity="0.36"/><rect x="3" y="446.4" width="1" height="1.3" fill="#8b949e" opacity="0.36"/><rect x="19" y="446.4" width="2" height="1.3" fill="#8b949e" opacity="0.36"/><rect x="3" y="448.4" width="1" height="1.3" fill="#8b949e" opacity="0.36"/><rect x="21" y="448.4" width="5" height="1.3" fill="#8b949e" opacity="0.36"/><rect x="27" y="448.4" width="6" height="1.3" fill="#8b949e" opacity="0.36"/><rect x="3" y="450.4" width="1" height="1.3" fill="#8b949e" opacity="0.36"/><rect x="19" y="450.4" width="5" height="1.3" fill="#8b949e" opacity="0.36"/><rect x="3" y="452.4" width="1" height="1.3" fill="#8b949e" opacity="0.36"/><rect x="21" y="452.4" width="5" height="1.3" fill="#8b949e" opacity="0.36"/><rect x="27" y="452.4" width="6" height="1.3" fill="#8b949e" opacity="0.36"/><rect x="3" y="454.4" width="1" height="1.3" fill="#8b949e" opacity="0.36"/><rect x="11" y="454.4" width="9" height="1.3" fill="#8b949e" opacity="0.36"/><rect x="21" y="454.4" width="4" height="1.3" fill="#8b949e" opacity="0.36"/><rect x="3" y="456.4" width="1" height="1.3" fill="#8b949e" opacity="0.36"/><rect x="11" y="456.4" width="8" height="1.3" fill="#8b949e" opacity="0.36"/><rect x="3" y="458.4" width="1" height="1.3" fill="#8b949e" opacity="0.36"/><rect x="13" y="458.4" width="17" height="1.3" fill="#8b949e" opacity="0.36"/><rect x="3" y="460.4" width="1" height="1.3" fill="#8b949e" opacity="0.36"/><rect x="15" y="460.4" width="7" height="1.3" fill="#8b949e" opacity="0.36"/><rect x="3" y="462.4" width="1" height="1.3" fill="#8b949e" opacity="0.36"/><rect x="17" y="462.4" width="5" height="1.3" fill="#8b949e" opacity="0.36"/><rect x="23" y="462.4" width="6" height="1.3" fill="#8b949e" opacity="0.36"/><rect x="3" y="464.4" width="1" height="1.3" fill="#8b949e" opacity="0.36"/><rect x="17" y="464.4" width="11" height="1.3" fill="#8b949e" opacity="0.36"/><rect x="3" y="466.4" width="1" height="1.3" fill="#8b949e" opacity="0.36"/><rect x="19" y="466.4" width="9" height="1.3" fill="#8b949e" opacity="0.36"/><rect x="3" y="468.4" width="1" height="1.3" fill="#8b949e" opacity="0.36"/><rect x="21" y="468.4" width="5" height="1.3" fill="#8b949e" opacity="0.36"/><rect x="27" y="468.4" width="6" height="1.3" fill="#8b949e" opacity="0.36"/><rect x="3" y="470.4" width="1" height="1.3" fill="#8b949e" opacity="0.36"/><rect x="19" y="470.4" width="9" height="1.3" fill="#8b949e" opacity="0.36"/><rect x="3" y="472.4" width="1" height="1.3" fill="#8b949e" opacity="0.36"/><rect x="9" y="472.4" width="10" height="1.3" fill="#8b949e" opacity="0.36"/><rect x="3" y="474.4" width="1" height="1.3" fill="#8b949e" opacity="0.36"/><rect x="11" y="474.4" width="6" height="1.3" fill="#8b949e" opacity="0.36"/><rect x="3" y="476.4" width="1" height="1.3" fill="#8b949e" opacity="0.36"/><rect x="13" y="476.4" width="12" height="1.3" fill="#8b949e" opacity="0.36"/><rect x="26" y="476.4" width="6" height="1.3" fill="#8b949e" opacity="0.36"/><rect x="33" y="476.4" width="5" height="1.3" fill="#8b949e" opacity="0.36"/><rect x="3" y="478.4" width="2" height="1.3" fill="#8b949e" opacity="0.36"/><rect x="0" y="480.0" width="59" height="2" fill="#8e1519" opacity="0.8"/><rect x="2" y="480.4" width="6" height="1.3" fill="#ff7b72" opacity="0.15"/><rect x="9" y="480.4" width="12" height="1.3" fill="#e6edf3" opacity="0.15"/><rect x="22" y="480.4" width="1" height="1.3" fill="#ff7b72" opacity="0.15"/><rect x="24" y="480.4" width="10" height="1.3" fill="#d2a8ff" opacity="0.15"/><rect x="34" y="480.4" width="1" height="1.3" fill="#e6edf3" opacity="0.15"/><rect x="35" y="480.4" width="5" height="1.3" fill="#ff7b72" opacity="0.15"/><rect x="41" y="480.4" width="1" height="1.3" fill="#e6edf3" opacity="0.15"/><rect x="42" y="480.4" width="3" height="1.3" fill="#ffa657" opacity="0.15"/><rect x="45" y="480.4" width="1" height="1.3" fill="#e6edf3" opacity="0.15"/><rect x="46" y="480.4" width="7" height="1.3" fill="#ffa657" opacity="0.15"/><rect x="53" y="480.4" width="1" height="1.3" fill="#e6edf3" opacity="0.15"/><rect x="55" y="480.4" width="3" height="1.3" fill="#ffa657" opacity="0.15"/><rect x="58" y="480.4" width="1" height="1.3" fill="#e6edf3" opacity="0.15"/><rect x="4" y="482.4" width="5" height="1.3" fill="#ff7b72" opacity="0.45"/><rect x="10" y="482.4" width="1" height="1.3" fill="#e6edf3" opacity="0.45"/><rect x="12" y="482.4" width="1" height="1.3" fill="#e6edf3" opacity="0.45"/><rect x="13" y="482.4" width="1" height="1.3" fill="#e6edf3" opacity="0.45"/><rect x="15" y="482.4" width="1" height="1.3" fill="#e6edf3" opacity="0.45"/><rect x="16" y="482.4" width="1" height="1.3" fill="#e6edf3" opacity="0.45"/><rect x="18" y="482.4" width="4" height="1.3" fill="#e6edf3" opacity="0.45"/><rect x="22" y="482.4" width="1" height="1.3" fill="#e6edf3" opacity="0.45"/><rect x="24" y="482.4" width="3" height="1.3" fill="#e6edf3" opacity="0.45"/><rect x="27" y="482.4" width="9" height="1.3" fill="#79c0ff" opacity="0.45"/><rect x="37" y="482.4" width="1" height="1.3" fill="#e6edf3" opacity="0.45"/><rect x="39" y="482.4" width="1" height="1.3" fill="#ff7b72" opacity="0.45"/><rect x="41" y="482.4" width="3" height="1.3" fill="#ffa657" opacity="0.45"/><rect x="44" y="482.4" width="1" height="1.3" fill="#e6edf3" opacity="0.45"/><rect x="45" y="482.4" width="4" height="1.3" fill="#e6edf3" opacity="0.45"/><rect x="49" y="482.4" width="1" height="1.3" fill="#e6edf3" opacity="0.45"/><rect x="4" y="486.4" width="5" height="1.3" fill="#ff7b72" opacity="0.45"/><rect x="10" y="486.4" width="6" height="1.3" fill="#79c0ff" opacity="0.45"/><rect x="17" y="486.4" width="1" height="1.3" fill="#ff7b72" opacity="0.45"/><rect x="19" y="486.4" width="5" height="1.3" fill="#ff7b72" opacity="0.45"/><rect x="25" y="486.4" width="11" height="1.3" fill="#ffa657" opacity="0.45"/><rect x="36" y="486.4" width="1" height="1.3" fill="#e6edf3" opacity="0.45"/><rect x="37" y="486.4" width="12" height="1.3" fill="#d2a8ff" opacity="0.45"/><rect x="49" y="486.4" width="2" height="1.3" fill="#e6edf3" opacity="0.45"/><rect x="52" y="486.4" width="7" height="1.3" fill="#79c0ff" opacity="0.45"/><rect x="4" y="488.4" width="3" height="1.3" fill="#ffa657" opacity="0.45"/><rect x="7" y="488.4" width="1" height="1.3" fill="#e6edf3" opacity="0.45"/><rect x="8" y="488.4" width="4" height="1.3" fill="#d2a8ff" opacity="0.45"/><rect x="12" y="488.4" width="1" height="1.3" fill="#e6edf3" opacity="0.45"/><rect x="13" y="488.4" width="6" height="1.3" fill="#79c0ff" opacity="0.45"/><rect x="19" y="488.4" width="2" height="1.3" fill="#e6edf3" opacity="0.45"/><rect x="2" y="490.4" width="3" height="1.3" fill="#e6edf3" opacity="0.45"/><rect x="2" y="494.4" width="3" height="1.3" fill="#8b949e" opacity="0.36"/><rect x="3" y="496.4" width="1" height="1.3" fill="#8b949e" opacity="0.36"/><rect x="5" y="496.4" width="8" height="1.3" fill="#ff7b72" opacity="0.45"/><rect x="3" y="498.4" width="1" height="1.3" fill="#8b949e" opacity="0.36"/><rect x="5" y="498.4" width="14" height="1.3" fill="#8b949e" opacity="0.36"/><rect x="3" y="500.4" width="1" height="1.3" fill="#8b949e" opacity="0.36"/><rect x="7" y="500.4" width="5" height="1.3" fill="#8b949e" opacity="0.36"/><rect x="3" y="502.4" width="1" height="1.3" fill="#8b949e" opacity="0.36"/><rect x="9" y="502.4" width="8" height="1.3" fill="#8b949e" opacity="0.36"/><rect x="18" y="502.4" width="5" height="1.3" fill="#8b949e" opacity="0.36"/><rect x="24" y="502.4" width="6" height="1.3" fill="#8b949e" opacity="0.36"/><rect x="31" y="502.4" width="9" height="1.3" fill="#8b949e" opacity="0.36"/><rect x="3" y="504.4" width="1" height="1.3" fill="#8b949e" opacity="0.36"/><rect x="9" y="504.4" width="12" height="1.3" fill="#8b949e" opacity="0.36"/><rect x="22" y="504.4" width="2" height="1.3" fill="#8b949e" opacity="0.36"/><rect x="3" y="506.4" width="1" height="1.3" fill="#8b949e" opacity="0.36"/><rect x="9" y="506.4" width="5" height="1.3" fill="#8b949e" opacity="0.36"/><rect x="3" y="508.4" width="1" height="1.3" fill="#8b949e" opacity="0.36"/><rect x="11" y="508.4" width="1" height="1.3" fill="#8b949e" opacity="0.36"/><rect x="13" y="508.4" width="6" height="1.3" fill="#8b949e" opacity="0.36"/><rect x="3" y="510.4" width="1" height="1.3" fill="#8b949e" opacity="0.36"/><rect x="9" y="510.4" width="12" height="1.3" fill="#8b949e" opacity="0.36"/><rect x="3" y="512.4" width="1" height="1.3" fill="#8b949e" opacity="0.36"/><rect x="11" y="512.4" width="9" height="1.3" fill="#8b949e" opacity="0.36"/><rect x="21" y="512.4" width="4" height="1.3" fill="#8b949e" opacity="0.36"/><rect x="3" y="514.4" width="1" height="1.3" fill="#8b949e" opacity="0.36"/><rect x="11" y="514.4" width="8" height="1.3" fill="#8b949e" opacity="0.36"/><rect x="3" y="516.4" width="1" height="1.3" fill="#8b949e" opacity="0.36"/><rect x="13" y="516.4" width="17" height="1.3" fill="#8b949e" opacity="0.36"/><rect x="3" y="518.4" width="1" height="1.3" fill="#8b949e" opacity="0.36"/><rect x="15" y="518.4" width="7" height="1.3" fill="#8b949e" opacity="0.36"/><rect x="3" y="520.4" width="1" height="1.3" fill="#8b949e" opacity="0.36"/><rect x="17" y="520.4" width="5" height="1.3" fill="#8b949e" opacity="0.36"/><rect x="23" y="520.4" width="6" height="1.3" fill="#8b949e" opacity="0.36"/><rect x="3" y="522.4" width="1" height="1.3" fill="#8b949e" opacity="0.36"/><rect x="17" y="522.4" width="11" height="1.3" fill="#8b949e" opacity="0.36"/><rect x="3" y="524.4" width="1" height="1.3" fill="#8b949e" opacity="0.36"/><rect x="19" y="524.4" width="9" height="1.3" fill="#8b949e" opacity="0.36"/><rect x="3" y="526.4" width="1" height="1.3" fill="#8b949e" opacity="0.36"/><rect x="21" y="526.4" width="5" height="1.3" fill="#8b949e" opacity="0.36"/><rect x="27" y="526.4" width="6" height="1.3" fill="#8b949e" opacity="0.36"/><rect x="3" y="528.4" width="1" height="1.3" fill="#8b949e" opacity="0.36"/><rect x="19" y="528.4" width="9" height="1.3" fill="#8b949e" opacity="0.36"/><rect x="3" y="530.4" width="1" height="1.3" fill="#8b949e" opacity="0.36"/><rect x="21" y="530.4" width="5" height="1.3" fill="#8b949e" opacity="0.36"/><rect x="27" y="530.4" width="6" height="1.3" fill="#8b949e" opacity="0.36"/><rect x="3" y="532.4" width="1" height="1.3" fill="#8b949e" opacity="0.36"/><rect x="19" y="532.4" width="9" height="1.3" fill="#8b949e" opacity="0.36"/><rect x="3" y="534.4" width="1" height="1.3" fill="#8b949e" opacity="0.36"/><rect x="21" y="534.4" width="5" height="1.3" fill="#8b949e" opacity="0.36"/><rect x="27" y="534.4" width="6" height="1.3" fill="#8b949e" opacity="0.36"/><rect x="3" y="536.4" width="1" height="1.3" fill="#8b949e" opacity="0.36"/><rect x="23" y="536.4" width="12" height="1.3" fill="#8b949e" opacity="0.36"/><rect x="36" y="536.4" width="3" height="1.3" fill="#8b949e" opacity="0.36"/><rect x="40" y="536.4" width="8" height="1.3" fill="#8b949e" opacity="0.36"/><rect x="49" y="536.4" width="2" height="1.3" fill="#8b949e" opacity="0.36"/><rect x="52" y="536.4" width="3" height="1.3" fill="#8b949e" opacity="0.36"/><rect x="56" y="536.4" width="3" height="1.3" fill="#8b949e" opacity="0.36"/><rect x="3" y="538.4" width="1" height="1.3" fill="#8b949e" opacity="0.36"/><rect x="19" y="538.4" width="2" height="1.3" fill="#8b949e" opacity="0.36"/><rect x="3" y="540.4" width="1" height="1.3" fill="#8b949e" opacity="0.36"/><rect x="21" y="540.4" width="5" height="1.3" fill="#8b949e" opacity="0.36"/><rect x="27" y="540.4" width="6" height="1.3" fill="#8b949e" opacity="0.36"/><rect x="3" y="542.4" width="1" height="1.3" fill="#8b949e" opacity="0.36"/><rect x="21" y="542.4" width="8" height="1.3" fill="#8b949e" opacity="0.36"/><rect x="30" y="542.4" width="3" height="1.3" fill="#8b949e" opacity="0.36"/><rect x="3" y="544.4" width="1" height="1.3" fill="#8b949e" opacity="0.36"/><rect x="19" y="544.4" width="2" height="1.3" fill="#8b949e" opacity="0.36"/><rect x="3" y="546.4" width="1" height="1.3" fill="#8b949e" opacity="0.36"/><rect x="21" y="546.4" width="5" height="1.3" fill="#8b949e" opacity="0.36"/><rect x="27" y="546.4" width="6" height="1.3" fill="#8b949e" opacity="0.36"/><rect x="3" y="548.4" width="1" height="1.3" fill="#8b949e" opacity="0.36"/><rect x="19" y="548.4" width="5" height="1.3" fill="#8b949e" opacity="0.36"/><rect x="3" y="550.4" width="1" height="1.3" fill="#8b949e" opacity="0.36"/><rect x="21" y="550.4" width="5" height="1.3" fill="#8b949e" opacity="0.36"/><rect x="27" y="550.4" width="6" height="1.3" fill="#8b949e" opacity="0.36"/><rect x="3" y="552.4" width="1" height="1.3" fill="#8b949e" opacity="0.36"/><rect x="11" y="552.4" width="9" height="1.3" fill="#8b949e" opacity="0.36"/><rect x="21" y="552.4" width="4" height="1.3" fill="#8b949e" opacity="0.36"/><rect x="3" y="554.4" width="1" height="1.3" fill="#8b949e" opacity="0.36"/><rect x="11" y="554.4" width="8" height="1.3" fill="#8b949e" opacity="0.36"/><rect x="3" y="556.4" width="1" height="1.3" fill="#8b949e" opacity="0.36"/><rect x="13" y="556.4" width="17" height="1.3" fill="#8b949e" opacity="0.36"/><rect x="3" y="558.4" width="1" height="1.3" fill="#8b949e" opacity="0.36"/><rect x="15" y="558.4" width="7" height="1.3" fill="#8b949e" opacity="0.36"/><rect x="3" y="560.4" width="1" height="1.3" fill="#8b949e" opacity="0.36"/><rect x="17" y="560.4" width="5" height="1.3" fill="#8b949e" opacity="0.36"/><rect x="23" y="560.4" width="6" height="1.3" fill="#8b949e" opacity="0.36"/><rect x="3" y="562.4" width="1" height="1.3" fill="#8b949e" opacity="0.36"/><rect x="17" y="562.4" width="11" height="1.3" fill="#8b949e" opacity="0.36"/><rect x="3" y="564.4" width="1" height="1.3" fill="#8b949e" opacity="0.36"/><rect x="19" y="564.4" width="9" height="1.3" fill="#8b949e" opacity="0.36"/><rect x="3" y="566.4" width="1" height="1.3" fill="#8b949e" opacity="0.36"/><rect x="21" y="566.4" width="5" height="1.3" fill="#8b949e" opacity="0.36"/><rect x="27" y="566.4" width="6" height="1.3" fill="#8b949e" opacity="0.36"/><rect x="3" y="568.4" width="1" height="1.3" fill="#8b949e" opacity="0.36"/><rect x="19" y="568.4" width="9" height="1.3" fill="#8b949e" opacity="0.36"/><rect x="3" y="570.4" width="1" height="1.3" fill="#8b949e" opacity="0.36"/><rect x="21" y="570.4" width="5" height="1.3" fill="#8b949e" opacity="0.36"/><rect x="27" y="570.4" width="6" height="1.3" fill="#8b949e" opacity="0.36"/><rect x="3" y="572.4" width="1" height="1.3" fill="#8b949e" opacity="0.36"/><rect x="19" y="572.4" width="9" height="1.3" fill="#8b949e" opacity="0.36"/><rect x="3" y="574.4" width="1" height="1.3" fill="#8b949e" opacity="0.36"/><rect x="21" y="574.4" width="5" height="1.3" fill="#8b949e" opacity="0.36"/><rect x="27" y="574.4" width="6" height="1.3" fill="#8b949e" opacity="0.36"/><rect x="3" y="576.4" width="1" height="1.3" fill="#8b949e" opacity="0.36"/><rect x="23" y="576.4" width="12" height="1.3" fill="#8b949e" opacity="0.36"/><rect x="36" y="576.4" width="3" height="1.3" fill="#8b949e" opacity="0.36"/><rect x="40" y="576.4" width="8" height="1.3" fill="#8b949e" opacity="0.36"/><rect x="49" y="576.4" width="2" height="1.3" fill="#8b949e" opacity="0.36"/><rect x="52" y="576.4" width="3" height="1.3" fill="#8b949e" opacity="0.36"/><rect x="56" y="576.4" width="3" height="1.3" fill="#8b949e" opacity="0.36"/><rect x="3" y="578.4" width="1" height="1.3" fill="#8b949e" opacity="0.36"/><rect x="9" y="578.4" width="10" height="1.3" fill="#8b949e" opacity="0.36"/><rect x="3" y="580.4" width="1" height="1.3" fill="#8b949e" opacity="0.36"/><rect x="11" y="580.4" width="6" height="1.3" fill="#8b949e" opacity="0.36"/><rect x="3" y="582.4" width="1" height="1.3" fill="#8b949e" opacity="0.36"/><rect x="13" y="582.4" width="12" height="1.3" fill="#8b949e" opacity="0.36"/><rect x="26" y="582.4" width="6" height="1.3" fill="#8b949e" opacity="0.36"/><rect x="33" y="582.4" width="5" height="1.3" fill="#8b949e" opacity="0.36"/><rect x="3" y="584.4" width="2" height="1.3" fill="#8b949e" opacity="0.36"/><rect x="0" y="586.0" width="59" height="2" fill="#8e1519" opacity="0.8"/><rect x="2" y="586.4" width="6" height="1.3" fill="#ff7b72" opacity="0.15"/><rect x="9" y="586.4" width="12" height="1.3" fill="#e6edf3" opacity="0.15"/><rect x="22" y="586.4" width="1" height="1.3" fill="#ff7b72" opacity="0.15"/><rect x="24" y="586.4" width="10" height="1.3" fill="#d2a8ff" opacity="0.15"/><rect x="34" y="586.4" width="1" height="1.3" fill="#e6edf3" opacity="0.15"/><rect x="35" y="586.4" width="5" height="1.3" fill="#ff7b72" opacity="0.15"/><rect x="41" y="586.4" width="1" height="1.3" fill="#e6edf3" opacity="0.15"/><rect x="42" y="586.4" width="3" height="1.3" fill="#ffa657" opacity="0.15"/><rect x="45" y="586.4" width="1" height="1.3" fill="#e6edf3" opacity="0.15"/><rect x="46" y="586.4" width="7" height="1.3" fill="#ffa657" opacity="0.15"/><rect x="53" y="586.4" width="1" height="1.3" fill="#e6edf3" opacity="0.15"/><rect x="55" y="586.4" width="3" height="1.3" fill="#ffa657" opacity="0.15"/><rect x="58" y="586.4" width="1" height="1.3" fill="#e6edf3" opacity="0.15"/><rect x="4" y="588.4" width="5" height="1.3" fill="#ff7b72" opacity="0.45"/><rect x="10" y="588.4" width="1" height="1.3" fill="#e6edf3" opacity="0.45"/><rect x="12" y="588.4" width="1" height="1.3" fill="#e6edf3" opacity="0.45"/><rect x="13" y="588.4" width="1" height="1.3" fill="#e6edf3" opacity="0.45"/><rect x="15" y="588.4" width="1" height="1.3" fill="#e6edf3" opacity="0.45"/><rect x="16" y="588.4" width="1" height="1.3" fill="#e6edf3" opacity="0.45"/><rect x="18" y="588.4" width="4" height="1.3" fill="#e6edf3" opacity="0.45"/><rect x="22" y="588.4" width="1" height="1.3" fill="#e6edf3" opacity="0.45"/><rect x="24" y="588.4" width="3" height="1.3" fill="#e6edf3" opacity="0.45"/><rect x="27" y="588.4" width="9" height="1.3" fill="#79c0ff" opacity="0.45"/><rect x="37" y="588.4" width="1" height="1.3" fill="#e6edf3" opacity="0.45"/><rect x="39" y="588.4" width="1" height="1.3" fill="#ff7b72" opacity="0.45"/><rect x="41" y="588.4" width="3" height="1.3" fill="#ffa657" opacity="0.45"/><rect x="44" y="588.4" width="1" height="1.3" fill="#e6edf3" opacity="0.45"/><rect x="45" y="588.4" width="4" height="1.3" fill="#e6edf3" opacity="0.45"/><rect x="49" y="588.4" width="1" height="1.3" fill="#e6edf3" opacity="0.45"/><rect x="4" y="592.4" width="5" height="1.3" fill="#ff7b72" opacity="0.45"/><rect x="10" y="592.4" width="6" height="1.3" fill="#79c0ff" opacity="0.45"/><rect x="17" y="592.4" width="1" height="1.3" fill="#ff7b72" opacity="0.45"/><rect x="19" y="592.4" width="5" height="1.3" fill="#ff7b72" opacity="0.45"/><rect x="25" y="592.4" width="11" height="1.3" fill="#ffa657" opacity="0.45"/><rect x="36" y="592.4" width="1" height="1.3" fill="#e6edf3" opacity="0.45"/><rect x="37" y="592.4" width="12" height="1.3" fill="#d2a8ff" opacity="0.45"/><rect x="49" y="592.4" width="2" height="1.3" fill="#e6edf3" opacity="0.45"/><rect x="52" y="592.4" width="7" height="1.3" fill="#79c0ff" opacity="0.45"/><rect x="4" y="594.4" width="3" height="1.3" fill="#ffa657" opacity="0.45"/><rect x="7" y="594.4" width="1" height="1.3" fill="#e6edf3" opacity="0.45"/><rect x="8" y="594.4" width="4" height="1.3" fill="#d2a8ff" opacity="0.45"/><rect x="12" y="594.4" width="1" height="1.3" fill="#e6edf3" opacity="0.45"/><rect x="13" y="594.4" width="6" height="1.3" fill="#79c0ff" opacity="0.45"/><rect x="19" y="594.4" width="2" height="1.3" fill="#e6edf3" opacity="0.45"/><rect x="2" y="596.4" width="3" height="1.3" fill="#e6edf3" opacity="0.45"/><rect x="2" y="600.4" width="3" height="1.3" fill="#8b949e" opacity="0.36"/></svg>
<div class="a" style="left:1012px;top:41px;width:1px;height:600px;background:#0a0d12"></div>
<div class="a" style="left:1013px;top:220px;width:17px;height:34px;background:#6e768133"></div>
<div class="a" style="left:1024.5px;top:44.6px;width:5.5px;height:13.7px;background:#c52a2f"></div>
<div class="a" style="left:1024.5px;top:64px;width:5.5px;height:6.2px;background:#c52a2f"></div>
<div class="a" style="left:1024.5px;top:74.3px;width:5.5px;height:5.9px;background:#c52a2f"></div>
<div class="a" style="left:1024.5px;top:96px;width:5.5px;height:6.4px;background:#c52a2f"></div>
<div class="a" style="left:1024.5px;top:235px;width:5.5px;height:4.2px;background:#c52a2f"></div>
<div class="a" style="left:1024.5px;top:287.5px;width:5.5px;height:5.8px;background:#c52a2f"></div>
<div class="a" style="left:1024.5px;top:355.9px;width:5.5px;height:14.7px;background:#c52a2f"></div>
<div class="a" style="left:1024.5px;top:426.3px;width:5.5px;height:5.4px;background:#c52a2f"></div>
<div class="a" style="left:1024.5px;top:498.8px;width:5.5px;height:6.2px;background:#c52a2f"></div>
<div class="a" style="left:1024.5px;top:533px;width:5.5px;height:6.0px;background:#c52a2f"></div>
<div class="a" style="left:1024.5px;top:587.9px;width:5.5px;height:6.1px;background:#c52a2f"></div>
<div class="a" style="left:1018px;top:41px;width:6.5px;height:6px;background:#a38fb0"></div>
<div class="a" style="left:1018px;top:171px;width:6.5px;height:6px;background:#8b949e"></div>
<div class="a" style="left:1018px;top:229px;width:6.5px;height:8px;background:#8b949e"></div>
<div class="a" style="left:1013px;top:232.5px;width:17px;height:2.5px;background:#4493f8"></div>
<div class="a" style="left:1115px;top:159.47px;width:572px;height:23.75px;background:#161b22"></div>
<div class="a" style="left:1115px;top:111.97px;width:1px;height:47.50px;background:#484f58"></div>
<div class="a" style="left:1031px;top:41px;width:656px;height:600px;overflow:hidden">
<div class="a mono code" style="left:0;width:51.5px;text-align:right;top:-0.27px;color:#6e7681">1</div>
<div class="a mono code" style="left:84px;top:-0.27px"></div>
<div class="a mono code" style="left:0;width:51.5px;text-align:right;top:23.47px;color:#6e7681">2</div>
<div class="a mono code" style="left:84px;top:23.47px"></div>
<div class="a mono code" style="left:0;width:51.5px;text-align:right;top:47.22px;color:#6e7681">3</div>
<div class="a mono code" style="left:84px;top:47.22px"><span class="k">export</span><span class="w"> </span><span class="k">const</span><span class="w"> </span><span class="f">filterClients</span><span class="w"> </span><span class="k">=</span><span class="w"> </span><span class="b1">(</span><span class="o sq">ws</span><span class="w">, </span><span class="o">path</span><span class="k">:</span><span class="c">string</span><span class="b1">)</span><span class="w"> </span><span class="k">=&gt;</span><span class="w"> </span><span class="b1">{</span></div>
<div class="a mono code" style="left:0;width:51.5px;text-align:right;top:70.97px;color:#6e7681">4</div>
<div class="a mono code" style="left:84px;top:70.97px"><span class="w">    </span><span class="cm">// console.log(&quot;CLEINT&quot;, ws.clients)</span></div>
<div class="a mono code" style="left:0;width:51.5px;text-align:right;top:94.72px;color:#6e7681">5</div>
<div class="a mono code" style="left:84px;top:94.72px"><span class="w">    </span><span class="k">return</span><span class="w"> </span><span class="c">Array</span><span class="w">.</span><span class="f">from</span><span class="b2">(</span><span class="w">ws?.clients </span><span class="k">||</span><span class="w"> </span><span class="b3">[]</span><span class="b2">)</span><span class="w">.</span><span class="f">filter</span><span class="b2">(</span><span class="b3">(</span><span class="o">client</span><span class="b3">)</span><span class="w"> </span><span class="k">=&gt;</span><span class="w"> </span><span class="b4">{</span></div>
<div class="a mono code" style="left:0;width:51.5px;text-align:right;top:118.47px;color:#e6edf3">6</div>
<div class="a mono code" style="left:84px;top:118.47px"><span class="b1">}</span></div>
<svg class="a" style="left:58px;top:19px" width="6" height="10" viewBox="0 0 6 10"><path d="M0 0 L5.5 5 L0 10 Z" fill="#6e2b2b"/></svg>
</div>
<div class="a" style="left:1346px;top:-1px;width:6px;height:3.5px;background:#d9534a;opacity:0.7;border-radius:0 0 3px 3px"></div>
<svg class="a" style="left:789.3px;top:343.2px;overflow:visible" width="91.4" height="4" viewBox="0 0 91.4 4"><polyline points="0.00,0.90 3.75,3.20 7.50,0.90 11.25,3.20 15.00,0.90 18.75,3.20 22.50,0.90 26.25,3.20 30.00,0.90 33.75,3.20 37.50,0.90 41.25,3.20 45.00,0.90 48.75,3.20 52.50,0.90 56.25,3.20 60.00,0.90 63.75,3.20 67.50,0.90 71.25,3.20 75.00,0.90 78.75,3.20 82.50,0.90 86.25,3.20" fill="none" stroke="#f85149" stroke-width="1.5"/></svg>
<svg class="a" style="left:1404.0px;top:108.1px;overflow:visible" width="23.0" height="4" viewBox="0 0 23.0 4"><polyline points="0.00,0.90 3.75,3.20 7.50,0.90 11.25,3.20 15.00,0.90 18.75,3.20" fill="none" stroke="#f85149" stroke-width="1.5"/></svg>
<div class="a" style="left:311px;top:641px;width:1376px;height:236px;background:#010409;border-top:1px solid #30363d"></div>
<div class="a" style="left:336.00px;top:654.59px;font-family:'Liberation Sans',sans-serif;font-size:13.6px;line-height:19px;white-space:pre;letter-spacing:-1.066px;color:#8b949e;">PROBLEMS</div>
<div class="a" style="left:478.00px;top:654.59px;font-family:'Liberation Sans',sans-serif;font-size:13.6px;line-height:19px;white-space:pre;letter-spacing:-0.727px;color:#8b949e;">OUTPUT</div>
<div class="a" style="left:559.40px;top:654.59px;font-family:'Liberation Sans',sans-serif;font-size:13.6px;line-height:19px;white-space:pre;letter-spacing:-0.852px;color:#8b949e;">DEBUG CONSOLE</div>
<div class="a" style="left:696.00px;top:654.59px;font-family:'Liberation Sans',sans-serif;font-size:13.6px;line-height:19px;white-space:pre;letter-spacing:-0.552px;color:#e6edf3;">TERMINAL</div>
<div class="a" style="left:415px;top:653px;width:35px;height:22px;border-radius:11px;background:#1f6feb"></div>
<div class="a" style="left:422.30px;top:654.79px;font-family:'Liberation Sans',sans-serif;font-size:13.6px;line-height:19px;white-space:pre;letter-spacing:-0.229px;color:#ffffff;">149</div>
<div class="a" style="left:694px;top:679.5px;width:69px;height:1.5px;background:#f78166"></div>
<svg class="a" style="left:1510px;top:650px" width="30" height="28" viewBox="1510 650 30 28"><path d="M1519.6 655.6 H1536 L1534.2 672.2 H1517.2 Z" fill="none" stroke="#9198a1" stroke-width="1.3" stroke-linejoin="round"/><path d="M1522.1 660.2 L1526.9 663.6 L1521.6 666.8 M1525.3 667.6 H1531.4" fill="none" stroke="#c9d1d9" stroke-width="1.1"/></svg>
<div class="a" style="left:1542.00px;top:654.30px;font-family:'Liberation Sans',sans-serif;font-size:15px;line-height:21px;white-space:pre;letter-spacing:-0.570px;color:#e6edf3;">powershell</div>
<svg class="a" style="left:1620px;top:655px" width="18" height="18" viewBox="0 0 18 18"><path d="M9 1 V17 M1 9 H17" stroke="#e6edf3" stroke-width="1.4"/></svg>
<svg class="a" style="left:1644px;top:660px" width="11" height="8" viewBox="0 0 11 8"><path d="M1 1.5 L5.5 6 L10 1.5" fill="none" stroke="#e6edf3" stroke-width="1.2"/></svg>
<svg class="a" style="left:1670px;top:655px" width="18" height="18" viewBox="0 0 18 18"><rect x="1" y="1" width="16" height="16" rx="1.5" fill="none" stroke="#e6edf3" stroke-width="1.4"/><path d="M9 1 V17" stroke="#e6edf3" stroke-width="1.4"/></svg>
<div class="a mono" style="left:336.2px;top:697.7px;font-size:15.6px;letter-spacing:-0.36px;line-height:20px;color:#e6edf3">Errors  Files</div>
<div class="a mono" style="left:336.2px;top:717.7px;font-size:15.6px;letter-spacing:-0.36px;line-height:20px;color:#e6edf3">     8  src/automation/autoDataExtractor.ts<span style="color:#8b949e">:47</span></div>
<div class="a mono" style="left:336.2px;top:737.7px;font-size:15.6px;letter-spacing:-0.36px;line-height:20px;color:#e6edf3">     2  src/automation/helper/downloadImageWithDigestRouter.ts<span style="color:#8b949e">:8</span></div>
<div class="a mono" style="left:336.2px;top:757.7px;font-size:15.6px;letter-spacing:-0.36px;line-height:20px;color:#e6edf3">     1  src/automation/helper/getMonitorCoordinates.ts<span style="color:#8b949e">:10</span></div>
<div class="a mono" style="left:336.2px;top:777.7px;font-size:15.6px;letter-spacing:-0.36px;line-height:20px;color:#e6edf3">    24  src/controller/CameraController.ts<span style="color:#8b949e">:5</span></div>
<div class="a mono" style="left:336.2px;top:797.7px;font-size:15.6px;letter-spacing:-0.36px;line-height:20px;color:#e6edf3">     1  src/controller/healthCheckController.ts<span style="color:#8b949e">:40</span></div>
<div class="a mono" style="left:336.2px;top:817.7px;font-size:15.6px;letter-spacing:-0.36px;line-height:20px;color:#e6edf3">     3  src/controller/helper/makeDataDump.ts<span style="color:#8b949e">:26</span></div>
<div class="a mono" style="left:336.2px;top:837.7px;font-size:15.6px;letter-spacing:-0.36px;line-height:20px;color:#e6edf3">    63  src/controller/ObservationController.ts<span style="color:#8b949e">:25</span></div>
<div class="a mono" style="left:336.2px;top:857.7px;font-size:15.6px;letter-spacing:-0.36px;line-height:20px;color:#e6edf3">     6  src/controller/ServerStatusController.ts<span style="color:#8b949e">:8</span></div>
</body></html>
